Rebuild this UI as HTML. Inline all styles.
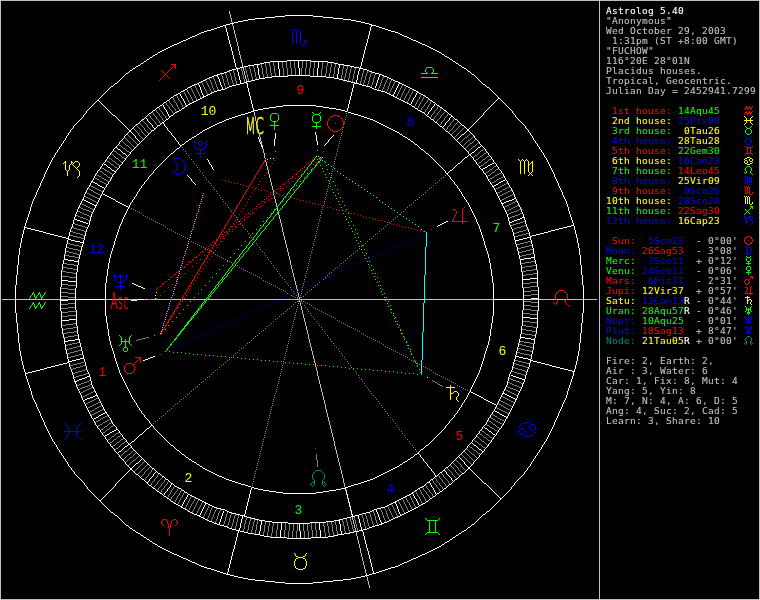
<!DOCTYPE html>
<html><head><meta charset="utf-8"><title>Astrolog 5.40</title>
<style>
html,body{margin:0;padding:0;background:#000}
body{width:760px;height:600px;overflow:hidden}
svg{display:block}
.px{fill:none;stroke-width:1;shape-rendering:crispEdges}
.t text{font-family:"DejaVu Sans Mono","Liberation Mono",monospace;font-size:9.5px;letter-spacing:.281px;white-space:pre;stroke-width:.1px}
text.h{font-family:"Liberation Mono",monospace;font-size:13px;text-anchor:middle}
text.l{font-family:"DejaVu Sans","Liberation Sans",sans-serif;font-weight:200;font-size:23.3px;text-anchor:middle;stroke-width:.5px;vector-effect:non-scaling-stroke}
</style></head><body>
<svg width="760" height="600" viewBox="0 0 760 600">
<mask id="m" maskUnits="userSpaceOnUse" x="0" y="0" width="760" height="600"><rect width="760" height="600" fill="#fff"/></mask>
<rect width="760" height="600" fill="#000"/>
<g class="px" transform="translate(0,.5)">
<path stroke="#c0c0c0" d="M2 299h595"/>
<path stroke="#c0c0c0" d="M229 11h1M229 12h1M229 13h1M230 14h1M230 15h1M230 16h1M230 17h1M231 18h1M231 19h1M231 20h1M231 21h1M232 22h1M232 23h1M232 24h1M232 25h1M233 26h1M233 27h1M233 28h1M233 29h1M234 30h1M234 31h1M234 32h1M234 33h1M235 34h1M235 35h1M235 36h1M235 37h1M236 38h1M236 39h1M236 40h1M236 41h1M237 42h1M237 43h1M237 44h1M237 45h1M238 46h1M238 47h1M238 48h1M238 49h1M238 50h1M239 51h1M239 52h1M239 53h1M239 54h1M240 55h1M240 56h1M240 57h1M240 58h1M241 59h1M241 60h1M241 61h1M241 62h1M242 63h1M242 64h1M242 65h1M242 66h1M243 67h1M243 68h1M243 69h1M243 70h1M244 71h1M244 72h1M244 73h1M244 74h1M245 75h1M245 76h1M245 77h1M245 78h1M246 79h1M246 80h1M246 81h1M246 82h1M247 83h1M247 84h1M247 85h1M247 86h1M247 87h1M248 88h1M248 89h1M248 90h1M248 91h1M249 92h1M249 93h1M249 94h1M249 95h1M250 96h1M250 97h1M250 98h1M250 99h1M251 100h1M251 101h1M251 102h1M251 103h1M252 104h1M252 105h1M252 106h1M252 107h1M253 108h1M253 109h1M253 110h1M253 111h1M254 112h1M254 113h1M254 114h1M254 115h1M255 116h1M255 117h1M255 118h1M255 119h1M255 120h1M256 121h1M256 122h1M256 123h1M256 124h1M257 125h1M257 126h1M257 127h1M257 128h1M258 129h1M258 130h1M258 131h1M258 132h1M259 133h1M259 134h1M259 135h1M259 136h1M260 137h1M260 138h1M260 139h1M260 140h1M261 141h1M261 142h1M261 143h1M261 144h1M262 145h1M262 146h1M262 147h1M262 148h1M263 149h1M263 150h1M263 151h1M263 152h1M264 153h1M264 154h1M264 155h1M264 156h1M264 157h1M265 158h1M265 159h1M265 160h1M265 161h1M266 162h1M266 163h1M266 164h1M266 165h1M267 166h1M267 167h1M267 168h1M267 169h1M268 170h1M268 171h1M268 172h1M268 173h1M269 174h1M269 175h1M269 176h1M269 177h1M270 178h1M270 179h1M270 180h1M270 181h1M271 182h1M271 183h1M271 184h1M271 185h1M272 186h1M272 187h1M272 188h1M272 189h1M273 190h1M273 191h1M273 192h1M273 193h1M273 194h1M274 195h1M274 196h1M274 197h1M274 198h1M275 199h1M275 200h1M275 201h1M275 202h1M276 203h1M276 204h1M276 205h1M276 206h1M277 207h1M277 208h1M277 209h1M277 210h1M278 211h1M278 212h1M278 213h1M278 214h1M279 215h1M279 216h1M279 217h1M279 218h1M280 219h1M280 220h1M280 221h1M280 222h1M281 223h1M281 224h1M281 225h1M281 226h1M282 227h1M282 228h1M282 229h1M282 230h1M282 231h1M283 232h1M283 233h1M283 234h1M283 235h1M284 236h1M284 237h1M284 238h1M284 239h1M285 240h1M285 241h1M285 242h1M285 243h1M286 244h1M286 245h1M286 246h1M286 247h1M287 248h1M287 249h1M287 250h1M287 251h1M288 252h1M288 253h1M288 254h1M288 255h1M289 256h1M289 257h1M289 258h1M289 259h1M290 260h1M290 261h1M290 262h1M290 263h1M290 264h1M291 265h1M291 266h1M291 267h1M291 268h1M292 269h1M292 270h1M292 271h1M292 272h1M293 273h1M293 274h1M293 275h1M293 276h1M294 277h1M294 278h1M294 279h1M294 280h1M295 281h1M295 282h1M295 283h1M295 284h1M296 285h1M296 286h1M296 287h1M296 288h1M297 289h1M297 290h1M297 291h1M297 292h1M298 293h1M298 294h1M298 295h1M298 296h1M299 297h1M299 298h1M299 299h1M299 300h1M299 301h1M300 302h1M300 303h1M300 304h1M300 305h1M301 306h1M301 307h1M301 308h1M301 309h1M302 310h1M302 311h1M302 312h1M302 313h1M303 314h1M303 315h1M303 316h1M303 317h1M304 318h1M304 319h1M304 320h1M304 321h1M305 322h1M305 323h1M305 324h1M305 325h1M306 326h1M306 327h1M306 328h1M306 329h1M307 330h1M307 331h1M307 332h1M307 333h1M308 334h1M308 335h1M308 336h1M308 337h1M308 338h1M309 339h1M309 340h1M309 341h1M309 342h1M310 343h1M310 344h1M310 345h1M310 346h1M311 347h1M311 348h1M311 349h1M311 350h1M312 351h1M312 352h1M312 353h1M312 354h1M313 355h1M313 356h1M313 357h1M313 358h1M314 359h1M314 360h1M314 361h1M314 362h1M315 363h1M315 364h1M315 365h1M315 366h1M316 367h1M316 368h1M316 369h1M316 370h1M317 371h1M317 372h1M317 373h1M317 374h1M317 375h1M318 376h1M318 377h1M318 378h1M318 379h1M319 380h1M319 381h1M319 382h1M319 383h1M320 384h1M320 385h1M320 386h1M320 387h1M321 388h1M321 389h1M321 390h1M321 391h1M322 392h1M322 393h1M322 394h1M322 395h1M323 396h1M323 397h1M323 398h1M323 399h1M324 400h1M324 401h1M324 402h1M324 403h1M325 404h1M325 405h1M325 406h1M325 407h1M325 408h1M326 409h1M326 410h1M326 411h1M326 412h1M327 413h1M327 414h1M327 415h1M327 416h1M328 417h1M328 418h1M328 419h1M328 420h1M329 421h1M329 422h1M329 423h1M329 424h1M330 425h1M330 426h1M330 427h1M330 428h1M331 429h1M331 430h1M331 431h1M331 432h1M332 433h1M332 434h1M332 435h1M332 436h1M333 437h1M333 438h1M333 439h1M333 440h1M334 441h1M334 442h1M334 443h1M334 444h1M334 445h1M335 446h1M335 447h1M335 448h1M335 449h1M336 450h1M336 451h1M336 452h1M336 453h1M337 454h1M337 455h1M337 456h1M337 457h1M338 458h1M338 459h1M338 460h1M338 461h1M339 462h1M339 463h1M339 464h1M339 465h1M340 466h1M340 467h1M340 468h1M340 469h1M341 470h1M341 471h1M341 472h1M341 473h1M342 474h1M342 475h1M342 476h1M342 477h1M343 478h1M343 479h1M343 480h1M343 481h1M343 482h1M344 483h1M344 484h1M344 485h1M344 486h1M345 487h1M345 488h1M345 489h1M345 490h1M346 491h1M346 492h1M346 493h1M346 494h1M347 495h1M347 496h1M347 497h1M347 498h1M348 499h1M348 500h1M348 501h1M348 502h1M349 503h1M349 504h1M349 505h1M349 506h1M350 507h1M350 508h1M350 509h1M350 510h1M351 511h1M351 512h1M351 513h1M351 514h1M352 515h1M352 516h1M352 517h1M352 518h1M352 519h1M353 520h1M353 521h1M353 522h1M353 523h1M354 524h1M354 525h1M354 526h1M354 527h1M355 528h1M355 529h1M355 530h1M355 531h1M356 532h1M356 533h1M356 534h1M356 535h1M357 536h1M357 537h1M357 538h1M357 539h1M358 540h1M358 541h1M358 542h1M358 543h1M359 544h1M359 545h1M359 546h1M359 547h1M360 548h1M360 549h1M360 550h1M360 551h1M360 552h1M361 553h1M361 554h1M361 555h1M361 556h1M362 557h1M362 558h1M362 559h1M362 560h1M363 561h1M363 562h1M363 563h1M363 564h1M364 565h1M364 566h1M364 567h1M364 568h1M365 569h1M365 570h1M365 571h1M365 572h1M366 573h1M366 574h1M366 575h1M366 576h1M367 577h1M367 578h1M367 579h1M367 580h1M368 581h1M368 582h1M368 583h1M368 584h1M369 585h1M369 586h1M369 587h1"/>
<path stroke="#808080" d="M282 61h1M286 61h1M290 61h1M294 61h1M302 61h1M306 61h1M310 61h1M314 61h1M269 62h1M273 62h1M282 62h1M286 62h1M290 62h1M294 62h1M302 62h1M306 62h1M310 62h1M314 62h1M322 62h1M327 62h1M265 63h1M269 63h1M273 63h1M282 63h1M286 63h1M290 63h1M294 63h1M302 63h1M306 63h1M310 63h1M314 63h1M322 63h1M327 63h1M331 63h1M335 63h1M261 64h1M265 64h1M269 64h1M273 64h1M282 64h1M286 64h1M290 64h1M294 64h1M302 64h1M306 64h1M310 64h1M314 64h1M322 64h1M327 64h1M331 64h1M335 64h1M253 65h1M261 65h1M265 65h1M269 65h1M273 65h1M282 65h1M286 65h1M290 65h1M294 65h1M302 65h1M306 65h1M310 65h1M314 65h1M322 65h1M327 65h1M331 65h1M335 65h1M343 65h1M249 66h1M253 66h1M261 66h1M265 66h1M270 66h1M274 66h1M282 66h1M286 66h1M290 66h1M294 66h1M302 66h1M306 66h1M310 66h1M314 66h1M322 66h1M326 66h1M331 66h1M335 66h1M343 66h1M347 66h1M351 66h1M245 67h1M249 67h1M253 67h1M261 67h1M266 67h1M270 67h1M274 67h1M282 67h1M286 67h1M290 67h1M294 67h1M302 67h1M306 67h1M310 67h1M314 67h1M322 67h1M326 67h1M330 67h1M334 67h1M343 67h1M347 67h1M351 67h1M355 67h1M241 68h1M245 68h1M249 68h1M254 68h1M262 68h1M266 68h1M270 68h1M274 68h1M283 68h1M287 68h1M291 68h1M295 68h1M301 68h1M305 68h1M309 68h1M313 68h1M322 68h1M326 68h1M330 68h1M334 68h1M343 68h1M347 68h1M351 68h1M355 68h1M241 69h1M245 69h1M250 69h1M254 69h1M262 69h1M266 69h1M270 69h1M274 69h1M283 69h1M287 69h1M291 69h1M295 69h1M301 69h1M305 69h1M309 69h1M313 69h1M321 69h1M326 69h1M330 69h1M334 69h1M342 69h1M346 69h1M350 69h1M355 69h1M233 70h1M241 70h1M246 70h1M250 70h1M254 70h1M262 70h1M266 70h1M270 70h1M274 70h1M283 70h1M287 70h1M291 70h1M295 70h1M301 70h1M305 70h1M309 70h1M313 70h1M321 70h1M326 70h1M330 70h1M334 70h1M342 70h1M346 70h1M350 70h1M354 70h1M363 70h1M229 71h1M233 71h1M242 71h1M246 71h1M250 71h1M254 71h1M262 71h1M266 71h1M270 71h1M274 71h1M283 71h1M287 71h1M291 71h1M295 71h1M301 71h1M305 71h1M309 71h1M313 71h1M321 71h1M326 71h1M330 71h1M334 71h1M342 71h1M346 71h1M350 71h1M354 71h1M363 71h1M367 71h1M229 72h1M233 72h1M242 72h1M246 72h1M250 72h1M255 72h1M262 72h1M266 72h1M270 72h1M274 72h1M283 72h1M287 72h1M291 72h1M295 72h1M301 72h1M305 72h1M309 72h1M313 72h1M321 72h1M326 72h1M330 72h1M334 72h1M342 72h1M346 72h1M350 72h1M354 72h1M363 72h1M367 72h1M371 72h1M225 73h1M230 73h1M234 73h1M242 73h1M246 73h1M251 73h1M255 73h1M262 73h1M266 73h1M271 73h1M275 73h1M283 73h1M287 73h1M291 73h1M295 73h1M301 73h1M305 73h1M309 73h1M313 73h1M321 73h1M325 73h1M329 73h1M334 73h1M342 73h1M345 73h1M349 73h1M354 73h1M362 73h1M366 73h1M371 73h1M375 73h1M221 74h1M225 74h1M230 74h1M234 74h1M242 74h1M247 74h1M251 74h1M255 74h1M263 74h1M267 74h1M271 74h1M275 74h1M283 74h1M287 74h1M291 74h1M295 74h1M301 74h1M305 74h1M309 74h1M313 74h1M321 74h1M325 74h1M329 74h1M333 74h1M342 74h1M345 74h1M349 74h1M353 74h1M362 74h1M366 74h1M370 74h1M375 74h1M221 75h1M226 75h1M230 75h1M234 75h1M243 75h1M247 75h1M251 75h1M255 75h1M263 75h1M267 75h1M271 75h1M275 75h1M283 75h1M287 75h1M313 75h1M321 75h1M325 75h1M329 75h1M333 75h1M341 75h1M345 75h1M349 75h1M353 75h1M362 75h1M366 75h1M370 75h1M374 75h1M222 76h1M226 76h1M231 76h1M234 76h1M243 76h1M247 76h1M251 76h1M255 76h1M263 76h1M267 76h1M271 76h1M275 76h1M325 76h1M329 76h1M333 76h1M341 76h1M345 76h1M349 76h1M353 76h1M362 76h1M365 76h1M370 76h1M374 76h1M383 76h1M213 77h1M222 77h1M226 77h1M231 77h1M235 77h1M243 77h1M247 77h1M252 77h1M256 77h1M263 77h1M267 77h1M333 77h1M341 77h1M344 77h1M349 77h1M353 77h1M361 77h1M365 77h1M369 77h1M374 77h1M383 77h1M209 78h1M213 78h1M222 78h1M227 78h1M231 78h1M235 78h1M243 78h1M248 78h1M252 78h1M256 78h1M341 78h1M344 78h1M348 78h1M353 78h1M361 78h1M365 78h1M369 78h1M373 78h1M382 78h1M387 78h1M209 79h1M214 79h1M223 79h1M227 79h1M231 79h1M235 79h1M244 79h1M248 79h1M252 79h1M256 79h1M344 79h1M348 79h1M352 79h1M361 79h1M365 79h1M369 79h1M373 79h1M382 79h1M387 79h1M391 79h1M205 80h1M210 80h1M214 80h1M223 80h1M227 80h1M232 80h1M235 80h1M244 80h1M248 80h1M348 80h1M352 80h1M361 80h1M364 80h1M369 80h1M373 80h1M381 80h1M386 80h1M391 80h1M206 81h1M210 81h1M215 81h1M223 81h1M227 81h1M232 81h1M236 81h1M244 81h1M352 81h1M360 81h1M364 81h1M368 81h1M373 81h1M381 81h1M386 81h1M390 81h1M395 81h1M201 82h1M206 82h1M211 82h1M215 82h1M223 82h1M228 82h1M232 82h1M236 82h1M360 82h1M364 82h1M368 82h1M372 82h1M381 82h1M385 82h1M390 82h1M394 82h1M202 83h1M207 83h1M211 83h1M215 83h1M224 83h1M228 83h1M233 83h1M236 83h1M360 83h1M363 83h1M368 83h1M372 83h1M380 83h1M385 83h1M389 83h1M394 83h1M202 84h1M207 84h1M211 84h1M216 84h1M224 84h1M228 84h1M233 84h1M363 84h1M367 84h1M372 84h1M380 84h1M384 84h1M389 84h1M393 84h1M402 84h1M194 85h1M203 85h1M208 85h1M212 85h1M216 85h1M224 85h1M229 85h1M367 85h1M371 85h1M380 85h1M384 85h1M389 85h1M393 85h1M402 85h1M195 86h1M203 86h1M208 86h1M212 86h1M216 86h1M225 86h1M229 86h1M371 86h1M379 86h1M384 86h1M388 86h1M392 86h1M401 86h1M406 86h1M190 87h1M195 87h1M204 87h1M209 87h1M212 87h1M217 87h1M225 87h1M379 87h1M383 87h1M388 87h1M392 87h1M401 87h1M405 87h1M191 88h1M196 88h1M204 88h1M209 88h1M213 88h1M217 88h1M378 88h1M383 88h1M388 88h1M391 88h1M400 88h1M405 88h1M410 88h1M186 89h1M191 89h1M196 89h1M205 89h1M210 89h1M213 89h1M218 89h1M378 89h1M382 89h1M387 89h1M391 89h1M400 89h1M404 89h1M409 89h1M187 90h1M192 90h1M197 90h1M205 90h1M210 90h1M214 90h1M218 90h1M382 90h1M387 90h1M390 90h1M399 90h1M404 90h1M409 90h1M413 90h1M183 91h1M187 91h1M192 91h1M197 91h1M206 91h1M211 91h1M214 91h1M386 91h1M390 91h1M399 91h1M403 91h1M408 91h1M412 91h1M184 92h1M188 92h1M193 92h1M198 92h1M206 92h1M211 92h1M386 92h1M389 92h1M398 92h1M403 92h1M408 92h1M412 92h1M184 93h1M188 93h1M193 93h1M198 93h1M207 93h1M389 93h1M398 93h1M402 93h1M407 93h1M411 93h1M185 94h1M189 94h1M194 94h1M199 94h1M207 94h1M397 94h1M402 94h1M406 94h1M411 94h1M421 94h1M176 95h1M185 95h1M190 95h1M194 95h1M199 95h1M397 95h1M401 95h1M406 95h1M410 95h1M420 95h1M177 96h1M186 96h1M190 96h1M195 96h1M200 96h1M396 96h1M401 96h1M405 96h1M410 96h1M420 96h1M424 96h1M172 97h1M177 97h1M186 97h1M191 97h1M195 97h1M200 97h1M396 97h1M400 97h1M405 97h1M409 97h1M419 97h1M423 97h1M173 98h1M178 98h1M187 98h1M191 98h1M196 98h1M400 98h1M404 98h1M409 98h1M419 98h1M423 98h1M173 99h1M178 99h1M187 99h1M192 99h1M196 99h1M404 99h1M408 99h1M418 99h1M422 99h1M428 99h1M168 100h1M174 100h1M179 100h1M188 100h1M192 100h1M403 100h1M408 100h1M417 100h1M422 100h1M427 100h1M169 101h1M174 101h1M180 101h1M188 101h1M193 101h1M407 101h1M417 101h1M421 101h1M427 101h1M431 101h1M165 102h1M169 102h1M175 102h1M180 102h1M189 102h1M407 102h1M416 102h1M420 102h1M426 102h1M430 102h1M166 103h1M170 103h1M176 103h1M181 103h1M189 103h1M416 103h1M420 103h1M425 103h1M430 103h1M166 104h1M171 104h1M176 104h1M181 104h1M415 104h1M419 104h1M424 104h1M429 104h1M167 105h1M172 105h1M177 105h1M182 105h1M415 105h1M419 105h1M424 105h1M428 105h1M168 106h1M172 106h1M177 106h1M182 106h1M414 106h1M418 106h1M423 106h1M428 106h1M438 106h1M158 107h1M169 107h1M173 107h1M178 107h1M183 107h1M418 107h1M422 107h1M427 107h1M437 107h1M159 108h1M169 108h1M174 108h1M178 108h1M417 108h1M421 108h1M427 108h1M437 108h1M441 108h1M155 109h1M159 109h1M170 109h1M175 109h1M179 109h1M421 109h1M426 109h1M436 109h1M440 109h1M156 110h1M160 110h1M171 110h1M175 110h1M420 110h1M425 110h1M435 110h1M440 110h1M156 111h1M161 111h1M172 111h1M176 111h1M425 111h1M434 111h1M439 111h1M445 111h1M152 112h1M157 112h1M162 112h1M172 112h1M424 112h1M434 112h1M438 112h1M444 112h1M153 113h1M158 113h1M162 113h1M173 113h1M433 113h1M437 113h1M443 113h1M448 113h1M148 114h1M153 114h1M159 114h1M163 114h1M432 114h1M437 114h1M442 114h1M447 114h1M149 115h1M154 115h1M159 115h1M164 115h1M431 115h1M436 115h1M441 115h1M447 115h1M150 116h1M155 116h1M160 116h1M165 116h1M431 116h1M435 116h1M440 116h1M446 116h1M150 117h1M156 117h1M161 117h1M165 117h1M430 117h1M434 117h1M440 117h1M445 117h1M151 118h1M156 118h1M162 118h1M166 118h1M434 118h1M439 118h1M444 118h1M454 118h1M152 119h1M157 119h1M162 119h1M433 119h1M438 119h1M444 119h1M453 119h1M142 120h1M153 120h1M158 120h1M163 120h1M437 120h1M443 120h1M453 120h1M143 121h1M154 121h1M159 121h1M436 121h1M442 121h1M452 121h1M458 121h1M144 122h1M155 122h1M159 122h1M441 122h1M451 122h1M457 122h1M139 123h1M145 123h1M155 123h1M160 123h1M441 123h1M450 123h1M456 123h1M140 124h1M146 124h1M156 124h1M440 124h1M450 124h1M455 124h1M461 124h1M136 125h1M141 125h1M147 125h1M157 125h1M449 125h1M454 125h1M460 125h1M137 126h1M142 126h1M147 126h1M448 126h1M453 126h1M459 126h1M138 127h1M143 127h1M148 127h1M447 127h1M453 127h1M458 127h1M464 127h1M133 128h1M139 128h1M144 128h1M149 128h1M447 128h1M452 128h1M457 128h1M463 128h1M134 129h1M140 129h1M144 129h1M150 129h1M446 129h1M451 129h1M456 129h1M462 129h1M135 130h1M141 130h1M145 130h1M151 130h1M450 130h1M455 130h1M461 130h1M136 131h1M141 131h1M146 131h1M449 131h1M454 131h1M460 131h1M137 132h1M142 132h1M147 132h1M453 132h1M459 132h1M138 133h1M143 133h1M148 133h1M452 133h1M458 133h1M470 133h1M127 134h1M138 134h1M144 134h1M451 134h1M457 134h1M469 134h1M128 135h1M139 135h1M145 135h1M456 135h1M468 135h1M129 136h1M140 136h1M455 136h1M467 136h1M473 136h1M124 137h1M130 137h1M141 137h1M454 137h1M465 137h2M472 137h1M125 138h1M131 138h1M142 138h1M464 138h1M471 138h1M126 139h1M132 139h1M463 139h1M470 139h1M475 139h1M121 140h1M127 140h1M133 140h1M462 140h1M468 140h2M474 140h1M122 141h1M128 141h1M134 141h1M461 141h1M467 141h1M473 141h1M123 142h1M129 142h1M135 142h1M460 142h1M466 142h1M472 142h1M478 142h1M124 143h1M130 143h1M136 143h1M465 143h1M470 143h2M477 143h1M118 144h1M125 144h1M131 144h1M137 144h1M464 144h1M469 144h1M476 144h1M119 145h2M126 145h2M132 145h1M463 145h1M468 145h1M475 145h1M121 146h1M128 146h1M133 146h1M467 146h1M473 146h2M122 147h1M129 147h1M134 147h1M466 147h1M472 147h1M123 148h2M130 148h1M465 148h1M471 148h1M484 148h1M125 149h1M131 149h1M470 149h1M483 149h1M113 150h1M126 150h1M469 150h1M481 150h2M114 151h2M127 151h2M468 151h1M480 151h1M116 152h1M129 152h1M479 152h1M486 152h1M111 153h1M117 153h1M478 153h1M484 153h2M112 154h1M118 154h2M477 154h1M483 154h1M113 155h1M120 155h1M475 155h2M482 155h1M489 155h1M114 156h1M121 156h1M474 156h1M480 156h2M487 156h2M108 157h1M115 157h1M122 157h2M473 157h1M479 157h1M486 157h1M109 158h2M116 158h2M124 158h1M478 158h1M485 158h1M491 158h1M111 159h1M118 159h1M476 159h2M483 159h2M489 159h2M106 160h1M112 160h1M119 160h1M475 160h1M482 160h1M488 160h1M107 161h2M113 161h2M120 161h1M481 161h1M487 161h1M109 162h1M115 162h1M121 162h1M479 162h2M485 162h2M110 163h1M116 163h1M478 163h1M484 163h1M111 164h2M117 164h2M483 164h1M113 165h1M119 165h1M481 165h2M496 165h1M114 166h1M480 166h1M494 166h2M101 167h1M115 167h2M493 167h1M102 168h2M117 168h1M492 168h1M498 168h1M104 169h1M490 169h2M496 169h2M99 170h1M105 170h2M489 170h1M495 170h1M100 171h2M107 171h2M488 171h1M494 171h1M102 172h1M109 172h1M486 172h2M492 172h2M501 172h1M103 173h1M110 173h2M485 173h1M491 173h1M499 173h2M96 174h1M104 174h2M112 174h1M490 174h1M497 174h2M97 175h2M106 175h1M488 175h2M495 175h2M99 176h2M107 176h1M487 176h1M494 176h1M503 176h1M94 177h1M101 177h1M108 177h2M492 177h2M501 177h2M95 178h2M102 178h2M110 178h1M490 178h2M499 178h2M97 179h2M104 179h2M489 179h1M497 179h2M99 180h1M106 180h2M496 180h1M100 181h2M108 181h1M494 181h2M102 182h2M492 182h2M104 183h2M491 183h1M506 183h2M106 184h1M504 184h2M90 185h1M502 185h2M91 186h2M500 186h2M509 186h1M93 187h2M498 187h2M507 187h2M88 188h1M95 188h2M496 188h2M505 188h2M89 189h2M97 189h2M495 189h1M503 189h2M91 190h2M99 190h2M502 190h1M510 190h2M93 191h1M101 191h2M500 191h2M508 191h2M86 192h1M94 192h2M498 192h2M506 192h2M87 193h2M96 193h2M497 193h1M504 193h2M89 194h2M98 194h2M502 194h2M512 194h2M91 195h2M100 195h1M500 195h2M510 195h2M84 196h2M93 196h2M499 196h1M508 196h2M86 197h2M95 197h2M506 197h2M88 198h2M97 198h2M504 198h2M90 199h2M502 199h2M92 200h2M501 200h1M94 201h2M515 201h2M96 202h2M513 202h2M81 203h1M511 203h2M82 204h2M509 204h2M84 205h2M507 205h2M517 205h2M86 206h2M505 206h2M515 206h2M79 207h2M88 207h2M504 207h1M513 207h2M81 208h2M90 208h2M511 208h2M83 209h3M92 209h2M509 209h2M519 209h2M86 210h3M507 210h2M517 210h2M78 211h2M89 211h2M506 211h1M514 211h3M80 212h2M91 212h2M511 212h3M82 213h2M509 213h2M520 213h2M84 214h3M507 214h2M518 214h2M76 215h2M87 215h2M515 215h3M78 216h2M89 216h2M512 216h3M80 217h3M510 217h2M83 218h3M508 218h2M86 219h2M88 220h2M523 221h2M520 222h3M73 223h2M516 223h4M75 224h3M513 224h3M78 225h4M511 225h2M524 225h2M82 226h3M521 226h3M72 227h2M85 227h2M517 227h4M74 228h3M514 228h3M77 229h4M512 229h2M526 229h2M81 230h3M523 230h3M71 231h2M84 231h2M519 231h4M73 232h3M516 232h3M76 233h4M514 233h2M526 233h3M80 234h3M522 234h4M70 235h3M83 235h2M518 235h4M73 236h4M515 236h3M77 237h4M81 238h3M528 241h3M524 242h4M67 243h3M520 243h4M70 244h4M517 244h3M74 245h5M529 245h3M79 246h3M525 246h4M66 247h3M521 247h4M69 248h4M518 248h3M73 249h5M530 249h3M78 250h3M526 250h4M66 251h3M522 251h4M69 252h4M519 252h3M73 253h4M531 253h3M77 254h3M526 254h5M65 255h4M522 255h4M69 256h6M519 256h3M75 257h4M531 261h4M525 262h6M63 263h4M521 263h4M67 264h7M74 265h4M532 265h4M525 266h7M63 267h4M521 267h4M67 268h6M73 269h4M533 269h4M526 270h7M62 271h4M522 271h4M66 272h7M73 273h4M533 273h4M526 274h7M522 275h4M62 276h7M69 277h7M530 282h8M523 283h7M61 284h7M68 285h8M530 286h8M523 287h7M61 288h7M68 289h7M531 290h7M524 291h7M61 292h7M68 293h7M531 294h7M524 295h7M61 296h7M68 297h7M524 301h7M531 302h7M68 303h7M61 304h7M524 305h7M531 306h7M68 307h7M61 308h7M524 309h7M531 310h7M68 311h8M61 312h7M523 313h7M530 314h8M68 315h8M61 316h7M523 321h7M530 322h7M73 323h4M66 324h7M62 325h4M522 325h4M526 326h7M73 327h4M533 327h4M66 328h7M62 329h4M522 329h4M526 330h6M74 331h4M532 331h4M67 332h7M63 333h4M521 333h4M525 334h7M74 335h4M532 335h4M68 336h6M64 337h4M520 341h4M77 342h3M524 342h6M72 343h5M530 343h4M68 344h4M519 344h3M65 345h3M522 345h4M77 346h3M526 346h4M73 347h4M530 347h3M69 348h4M518 348h3M66 349h3M521 349h4M78 350h3M525 350h5M74 351h4M530 351h3M70 352h4M517 352h3M67 353h3M520 353h4M79 354h3M524 354h5M75 355h4M529 355h3M71 356h4M68 357h3M515 360h3M518 361h4M81 362h3M522 362h4M77 363h4M514 363h2M526 363h3M73 364h4M516 364h3M70 365h3M83 365h2M519 365h4M80 366h3M523 366h3M76 367h4M513 367h2M526 367h2M73 368h3M515 368h3M71 369h2M85 369h2M518 369h4M82 370h3M522 370h3M78 371h4M512 371h2M525 371h2M75 372h3M514 372h3M73 373h2M86 373h2M517 373h4M83 374h3M521 374h3M79 375h4M524 375h2M76 376h3M74 377h2M509 378h2M511 379h2M89 380h2M513 380h3M87 381h2M516 381h3M84 382h3M508 382h2M519 382h2M81 383h3M510 383h2M521 383h2M79 384h2M90 384h2M512 384h2M77 385h2M88 385h2M514 385h3M85 386h3M506 386h2M517 386h2M82 387h3M91 387h2M508 387h2M519 387h2M80 388h2M89 388h2M510 388h3M78 389h2M87 389h2M505 389h1M513 389h3M85 390h2M506 390h2M516 390h2M83 391h2M93 391h2M508 391h2M518 391h2M81 392h2M91 392h2M510 392h2M80 393h1M89 393h2M512 393h2M87 394h2M514 394h2M85 395h2M516 395h2M83 396h2M501 396h2M82 397h1M503 397h2M96 398h2M505 398h2M94 399h2M507 399h2M92 400h2M500 400h1M509 400h2M90 401h2M501 401h2M511 401h2M88 402h2M98 402h2M503 402h2M513 402h2M86 403h2M96 403h2M498 403h1M505 403h2M85 404h1M94 404h2M499 404h2M507 404h2M92 405h2M101 405h1M501 405h2M509 405h2M90 406h2M99 406h2M503 406h1M511 406h2M88 407h2M97 407h2M496 407h1M504 407h2M87 408h1M95 408h2M497 408h2M506 408h2M94 409h1M102 409h2M499 409h2M508 409h2M92 410h2M100 410h2M501 410h2M510 410h1M90 411h2M98 411h2M503 411h2M89 412h1M96 412h2M505 412h2M94 413h2M507 413h2M92 414h2M492 414h1M91 415h1M107 415h1M493 415h2M105 416h2M495 416h2M103 417h2M490 417h1M497 417h1M101 418h2M491 418h2M498 418h2M100 419h1M109 419h1M493 419h2M500 419h2M98 420h2M107 420h2M488 420h1M495 420h1M502 420h2M96 421h2M105 421h2M489 421h2M496 421h2M504 421h1M95 422h1M103 422h2M111 422h1M491 422h1M498 422h2M102 423h1M109 423h2M492 423h1M500 423h2M100 424h2M108 424h1M486 424h1M493 424h2M502 424h1M98 425h2M107 425h1M113 425h1M487 425h2M495 425h1M97 426h1M105 426h2M111 426h2M489 426h1M496 426h1M104 427h1M110 427h1M490 427h2M497 427h2M103 428h1M109 428h1M492 428h2M499 428h1M101 429h2M107 429h2M494 429h1M100 430h1M106 430h1M481 430h1M495 430h2M105 431h1M482 431h2M497 431h1M103 432h2M118 432h1M484 432h1M102 433h1M116 433h2M479 433h1M485 433h1M115 434h1M480 434h2M486 434h2M114 435h1M120 435h1M482 435h1M488 435h1M112 436h2M118 436h2M477 436h1M483 436h1M489 436h1M111 437h1M117 437h1M478 437h1M484 437h2M490 437h2M110 438h1M116 438h1M123 438h1M479 438h1M486 438h1M492 438h1M108 439h2M114 439h2M121 439h2M480 439h1M487 439h1M107 440h1M113 440h1M120 440h1M474 440h1M481 440h1M488 440h2M112 441h1M119 441h1M125 441h1M475 441h2M482 441h2M490 441h1M110 442h2M117 442h2M124 442h1M477 442h1M484 442h1M109 443h1M116 443h1M122 443h2M478 443h1M485 443h1M115 444h1M121 444h1M479 444h2M486 444h1M113 445h2M120 445h1M481 445h1M487 445h1M112 446h1M119 446h1M469 446h1M482 446h1M118 447h1M130 447h1M470 447h2M483 447h2M116 448h2M129 448h1M472 448h1M485 448h1M115 449h1M128 449h1M467 449h1M473 449h1M114 450h1M127 450h1M133 450h1M468 450h1M474 450h2M125 451h2M132 451h1M464 451h1M469 451h1M476 451h1M124 452h1M131 452h1M465 452h1M470 452h1M477 452h1M123 453h1M130 453h1M135 453h1M466 453h1M471 453h1M478 453h2M122 454h1M128 454h2M134 454h1M461 454h1M467 454h1M472 454h2M480 454h1M121 455h1M127 455h1M133 455h1M462 455h1M468 455h1M474 455h1M120 456h1M126 456h1M132 456h1M138 456h1M463 456h1M469 456h1M475 456h1M125 457h1M130 457h2M137 457h1M464 457h1M470 457h1M476 457h1M124 458h1M129 458h1M136 458h1M465 458h1M471 458h1M477 458h1M123 459h1M128 459h1M135 459h1M466 459h1M472 459h1M127 460h1M133 460h2M456 460h1M467 460h1M473 460h1M126 461h1M132 461h1M144 461h1M457 461h1M468 461h1M474 461h1M125 462h1M131 462h1M143 462h1M458 462h1M469 462h1M130 463h1M142 463h1M453 463h1M459 463h1M470 463h1M129 464h1M141 464h1M147 464h1M454 464h1M460 464h1M471 464h1M128 465h1M140 465h1M146 465h1M450 465h1M455 465h1M461 465h1M139 466h1M145 466h1M451 466h1M456 466h1M461 466h1M138 467h1M144 467h1M149 467h1M452 467h1M457 467h1M462 467h1M137 468h1M143 468h1M148 468h1M447 468h1M453 468h1M458 468h1M463 468h1M136 469h1M142 469h1M147 469h1M152 469h1M448 469h1M454 469h1M458 469h1M464 469h1M135 470h1M141 470h1M146 470h1M151 470h1M449 470h1M455 470h1M459 470h1M465 470h1M134 471h1M140 471h1M145 471h1M151 471h1M450 471h1M455 471h1M460 471h1M139 472h1M144 472h1M150 472h1M451 472h1M456 472h1M461 472h1M138 473h1M144 473h1M149 473h1M441 473h1M452 473h1M457 473h1M462 473h1M137 474h1M143 474h1M148 474h1M158 474h1M442 474h1M452 474h1M458 474h1M142 475h1M148 475h1M157 475h1M438 475h1M443 475h1M453 475h1M459 475h1M141 476h1M147 476h1M157 476h1M439 476h1M443 476h1M454 476h1M140 477h1M146 477h1M156 477h1M162 477h1M439 477h1M444 477h1M455 477h1M145 478h1M155 478h1M161 478h1M435 478h1M440 478h1M445 478h1M456 478h1M145 479h1M154 479h1M160 479h1M165 479h1M436 479h1M441 479h1M446 479h1M144 480h1M154 480h1M159 480h1M164 480h1M432 480h1M436 480h1M442 480h1M447 480h1M153 481h1M158 481h1M164 481h1M168 481h1M433 481h1M437 481h1M442 481h1M448 481h1M152 482h1M157 482h1M163 482h1M167 482h1M433 482h1M438 482h1M443 482h1M448 482h1M151 483h1M157 483h1M162 483h1M167 483h1M434 483h1M439 483h1M444 483h1M449 483h1M151 484h1M156 484h1M161 484h1M166 484h1M435 484h1M439 484h1M445 484h1M450 484h1M150 485h1M155 485h1M161 485h1M165 485h1M425 485h1M436 485h1M440 485h1M445 485h1M154 486h1M160 486h1M164 486h1M174 486h1M426 486h1M436 486h1M441 486h1M446 486h1M153 487h1M159 487h1M164 487h1M173 487h1M422 487h1M426 487h1M437 487h1M442 487h1M158 488h1M163 488h1M173 488h1M178 488h1M423 488h1M427 488h1M438 488h1M442 488h1M158 489h1M162 489h1M172 489h1M177 489h1M419 489h1M423 489h1M428 489h1M439 489h1M443 489h1M157 490h1M161 490h1M171 490h1M177 490h1M181 490h1M420 490h1M424 490h1M429 490h1M439 490h1M161 491h1M171 491h1M176 491h1M180 491h1M415 491h1M420 491h1M425 491h1M429 491h1M440 491h1M160 492h1M170 492h1M175 492h1M180 492h1M184 492h1M416 492h1M421 492h1M426 492h1M430 492h1M170 493h1M174 493h1M179 493h1M183 493h1M416 493h1M421 493h1M426 493h1M431 493h1M169 494h1M174 494h1M179 494h1M183 494h1M417 494h1M422 494h1M427 494h1M432 494h1M168 495h1M173 495h1M178 495h1M182 495h1M409 495h1M417 495h1M423 495h1M428 495h1M432 495h1M168 496h1M172 496h1M177 496h1M182 496h1M191 496h1M410 496h1M418 496h1M423 496h1M429 496h1M433 496h1M167 497h1M171 497h1M177 497h1M181 497h1M190 497h1M405 497h1M410 497h1M419 497h1M424 497h1M429 497h1M171 498h1M176 498h1M180 498h1M190 498h1M195 498h1M406 498h1M411 498h1M419 498h1M424 498h1M430 498h1M170 499h1M176 499h1M180 499h1M189 499h1M194 499h1M402 499h1M406 499h1M411 499h1M420 499h1M425 499h1M175 500h1M179 500h1M189 500h1M194 500h1M198 500h1M403 500h1M407 500h1M412 500h1M420 500h1M425 500h1M175 501h1M179 501h1M188 501h1M193 501h1M197 501h1M202 501h1M398 501h1M403 501h1M407 501h1M412 501h1M421 501h1M426 501h1M174 502h1M178 502h1M188 502h1M193 502h1M197 502h1M202 502h1M399 502h1M404 502h1M408 502h1M413 502h1M421 502h1M178 503h1M187 503h1M192 503h1M196 503h1M201 503h1M399 503h1M404 503h1M409 503h1M413 503h1M422 503h1M177 504h1M187 504h1M191 504h1M196 504h1M201 504h1M391 504h1M400 504h1M405 504h1M409 504h1M414 504h1M186 505h1M191 505h1M195 505h1M200 505h1M209 505h1M392 505h1M400 505h1M405 505h1M410 505h1M414 505h1M186 506h1M190 506h1M195 506h1M200 506h1M208 506h1M212 506h1M387 506h1M392 506h1M401 506h1M406 506h1M410 506h1M415 506h1M185 507h1M190 507h1M194 507h1M199 507h1M208 507h1M212 507h1M384 507h1M388 507h1M393 507h1M401 507h1M406 507h1M411 507h1M415 507h1M185 508h1M189 508h1M194 508h1M199 508h1M207 508h1M211 508h1M216 508h1M380 508h1M384 508h1M388 508h1M393 508h1M402 508h1M407 508h1M411 508h1M189 509h1M193 509h1M198 509h1M207 509h1M211 509h1M216 509h1M220 509h1M380 509h1M385 509h1M389 509h1M394 509h1M402 509h1M407 509h1M412 509h1M188 510h1M193 510h1M198 510h1M206 510h1M210 510h1M215 510h1M220 510h1M381 510h1M385 510h1M389 510h1M394 510h1M403 510h1M408 510h1M192 511h1M197 511h1M206 511h1M210 511h1M215 511h1M219 511h1M373 511h1M381 511h1M386 511h1M390 511h1M395 511h1M403 511h1M408 511h1M192 512h1M197 512h1M205 512h1M210 512h1M214 512h1M219 512h1M227 512h1M369 512h1M373 512h1M382 512h1M386 512h1M390 512h1M395 512h1M404 512h1M196 513h1M205 513h1M209 513h1M214 513h1M218 513h1M227 513h1M231 513h1M369 513h1M374 513h1M382 513h1M386 513h1M391 513h1M396 513h1M404 513h1M196 514h1M204 514h1M209 514h1M213 514h1M218 514h1M226 514h1M231 514h1M235 514h1M365 514h1M370 514h1M374 514h1M382 514h1M387 514h1M391 514h1M396 514h1M204 515h1M209 515h1M213 515h1M218 515h1M226 515h1M230 515h1M235 515h1M238 515h1M362 515h1M365 515h1M370 515h1M374 515h1M383 515h1M387 515h1M392 515h1M397 515h1M203 516h1M208 516h1M213 516h1M217 516h1M226 516h1M230 516h1M234 516h1M238 516h1M362 516h1M366 516h1M370 516h1M375 516h1M383 516h1M387 516h1M392 516h1M397 516h1M203 517h1M208 517h1M212 517h1M217 517h1M225 517h1M230 517h1M234 517h1M238 517h1M246 517h1M354 517h1M362 517h1M366 517h1M371 517h1M375 517h1M383 517h1M388 517h1M393 517h1M207 518h1M212 518h1M217 518h1M225 518h1M229 518h1M234 518h1M237 518h1M246 518h1M250 518h1M350 518h1M354 518h1M363 518h1M366 518h1M371 518h1M375 518h1M384 518h1M388 518h1M393 518h1M207 519h1M211 519h1M216 519h1M225 519h1M229 519h1M233 519h1M237 519h1M246 519h1M250 519h1M254 519h1M342 519h1M346 519h1M350 519h1M354 519h1M363 519h1M367 519h1M371 519h1M375 519h1M384 519h1M389 519h1M211 520h1M216 520h1M225 520h1M229 520h1M233 520h1M237 520h1M245 520h1M250 520h1M254 520h1M257 520h1M342 520h1M346 520h1M350 520h1M355 520h1M363 520h1M367 520h1M371 520h1M376 520h1M385 520h1M389 520h1M215 521h1M224 521h1M229 521h1M233 521h1M237 521h1M245 521h1M249 521h1M254 521h1M257 521h1M265 521h1M331 521h1M335 521h1M342 521h1M346 521h1M351 521h1M355 521h1M363 521h1M367 521h1M372 521h1M376 521h1M385 521h1M215 522h1M224 522h1M228 522h1M233 522h1M236 522h1M245 522h1M249 522h1M253 522h1M257 522h1M265 522h1M269 522h1M273 522h1M323 522h1M327 522h1M331 522h1M335 522h1M343 522h1M347 522h1M351 522h1M355 522h1M364 522h1M367 522h1M372 522h1M376 522h1M224 523h1M228 523h1M232 523h1M236 523h1M245 523h1M249 523h1M253 523h1M257 523h1M265 523h1M269 523h1M273 523h1M277 523h1M285 523h1M311 523h1M315 523h1M323 523h1M327 523h1M331 523h1M335 523h1M343 523h1M347 523h1M351 523h1M355 523h1M364 523h1M368 523h1M372 523h1M377 523h1M223 524h1M228 524h1M232 524h1M236 524h1M244 524h1M249 524h1M253 524h1M256 524h1M265 524h1M269 524h1M273 524h1M277 524h1M285 524h1M289 524h1M293 524h1M297 524h1M303 524h1M307 524h1M311 524h1M315 524h1M323 524h1M327 524h1M331 524h1M335 524h1M343 524h1M347 524h1M351 524h1M356 524h1M364 524h1M368 524h1M373 524h1M377 524h1M223 525h1M227 525h1M232 525h1M236 525h1M244 525h1M248 525h1M253 525h1M256 525h1M264 525h1M269 525h1M273 525h1M277 525h1M285 525h1M289 525h1M293 525h1M297 525h1M303 525h1M307 525h1M311 525h1M315 525h1M323 525h1M327 525h1M332 525h1M336 525h1M343 525h1M347 525h1M352 525h1M356 525h1M364 525h1M368 525h1M373 525h1M227 526h1M231 526h1M235 526h1M244 526h1M248 526h1M252 526h1M256 526h1M264 526h1M268 526h1M272 526h1M277 526h1M285 526h1M289 526h1M293 526h1M297 526h1M303 526h1M307 526h1M311 526h1M315 526h1M324 526h1M328 526h1M332 526h1M336 526h1M344 526h1M348 526h1M352 526h1M356 526h1M365 526h1M369 526h1M231 527h1M235 527h1M244 527h1M248 527h1M252 527h1M256 527h1M264 527h1M268 527h1M272 527h1M277 527h1M285 527h1M289 527h1M293 527h1M297 527h1M303 527h1M307 527h1M311 527h1M315 527h1M324 527h1M328 527h1M332 527h1M336 527h1M344 527h1M348 527h1M352 527h1M356 527h1M365 527h1M369 527h1M235 528h1M244 528h1M248 528h1M252 528h1M256 528h1M264 528h1M268 528h1M272 528h1M277 528h1M285 528h1M289 528h1M293 528h1M297 528h1M303 528h1M307 528h1M311 528h1M315 528h1M324 528h1M328 528h1M332 528h1M336 528h1M344 528h1M348 528h1M352 528h1M357 528h1M365 528h1M243 529h1M248 529h1M252 529h1M256 529h1M264 529h1M268 529h1M272 529h1M277 529h1M285 529h1M289 529h1M293 529h1M297 529h1M303 529h1M307 529h1M311 529h1M315 529h1M324 529h1M328 529h1M332 529h1M336 529h1M344 529h1M348 529h1M353 529h1M357 529h1M243 530h1M247 530h1M251 530h1M255 530h1M264 530h1M268 530h1M272 530h1M276 530h1M284 530h1M289 530h1M293 530h1M297 530h1M303 530h1M307 530h1M312 530h1M316 530h1M324 530h1M328 530h1M332 530h1M336 530h1M344 530h1M349 530h1M353 530h1M357 530h1M243 531h1M247 531h1M251 531h1M255 531h1M264 531h1M268 531h1M272 531h1M276 531h1M284 531h1M288 531h1M292 531h1M296 531h1M304 531h1M308 531h1M312 531h1M316 531h1M324 531h1M328 531h1M332 531h1M337 531h1M345 531h1M349 531h1M353 531h1M247 532h1M251 532h1M255 532h1M263 532h1M267 532h1M272 532h1M276 532h1M284 532h1M288 532h1M292 532h1M296 532h1M304 532h1M308 532h1M312 532h1M316 532h1M324 532h1M328 532h1M333 532h1M337 532h1M345 532h1M349 532h1M255 533h1M263 533h1M267 533h1M271 533h1M276 533h1M284 533h1M288 533h1M292 533h1M296 533h1M304 533h1M308 533h1M312 533h1M316 533h1M325 533h1M329 533h1M333 533h1M337 533h1M345 533h1M263 534h1M267 534h1M271 534h1M276 534h1M284 534h1M288 534h1M292 534h1M296 534h1M304 534h1M308 534h1M312 534h1M316 534h1M325 534h1M329 534h1M333 534h1M337 534h1M263 535h1M267 535h1M271 535h1M276 535h1M284 535h1M288 535h1M292 535h1M296 535h1M304 535h1M308 535h1M312 535h1M316 535h1M325 535h1M329 535h1M333 535h1M271 536h1M276 536h1M284 536h1M288 536h1M292 536h1M296 536h1M304 536h1M308 536h1M312 536h1M316 536h1M325 536h1M329 536h1M284 537h1M288 537h1M292 537h1M296 537h1M304 537h1M308 537h1M312 537h1M316 537h1"/>
<path stroke="#fff" d="M298 61h1M318 61h1M278 62h1M298 62h1M318 62h1M278 63h1M298 63h1M318 63h1M257 64h1M278 64h1M298 64h1M318 64h1M339 64h1M257 65h1M278 65h1M298 65h1M318 65h1M339 65h1M257 66h1M278 66h1M298 66h1M318 66h1M339 66h1M257 67h1M278 67h1M298 67h1M318 67h1M339 67h1M258 68h1M278 68h1M299 68h1M317 68h1M338 68h1M359 68h1M237 69h1M258 69h1M279 69h1M299 69h1M317 69h1M338 69h1M359 69h1M237 70h1M258 70h1M279 70h1M299 70h1M317 70h1M338 70h1M359 70h1M237 71h1M258 71h1M279 71h1M299 71h1M317 71h1M338 71h1M358 71h1M238 72h1M258 72h1M279 72h1M299 72h1M317 72h1M338 72h1M358 72h1M238 73h1M258 73h1M279 73h1M299 73h1M317 73h1M338 73h1M358 73h1M238 74h1M258 74h1M279 74h1M299 74h1M317 74h1M337 74h1M358 74h1M217 75h1M238 75h1M259 75h1M279 75h1M317 75h1M337 75h1M357 75h1M379 75h1M217 76h1M239 76h1M259 76h1M337 76h1M357 76h1M379 76h1M218 77h1M239 77h1M259 77h1M337 77h1M357 77h1M378 77h1M218 78h1M239 78h1M259 78h1M357 78h1M378 78h1M219 79h1M239 79h1M357 79h1M378 79h1M219 80h1M240 80h1M356 80h1M377 80h1M219 81h1M240 81h1M356 81h1M377 81h1M220 82h1M240 82h1M356 82h1M377 82h1M399 82h1M198 83h1M220 83h1M376 83h1M399 83h1M198 84h1M220 84h1M376 84h1M398 84h1M199 85h1M221 85h1M376 85h1M398 85h1M199 86h1M221 86h1M375 86h1M397 86h1M200 87h1M222 87h1M375 87h1M397 87h1M200 88h1M222 88h1M396 88h1M200 89h1M396 89h1M201 90h1M395 90h1M201 91h1M395 91h1M201 92h1M394 92h1M417 92h1M179 93h1M202 93h1M394 93h1M416 93h1M180 94h1M202 94h1M393 94h1M416 94h1M180 95h1M203 95h1M393 95h1M415 95h1M181 96h1M203 96h1M415 96h1M181 97h1M414 97h1M182 98h1M413 98h1M183 99h1M413 99h1M183 100h1M412 100h1M184 101h1M412 101h1M184 102h1M411 102h1M185 103h1M411 103h1M435 103h1M162 104h1M185 104h1M410 104h1M434 104h1M163 105h1M186 105h1M434 105h1M163 106h1M433 106h1M164 107h1M432 107h1M164 108h1M431 108h1M165 109h1M431 109h1M166 110h1M430 110h1M166 111h1M429 111h1M167 112h1M428 112h1M167 113h1M428 113h1M168 114h1M427 114h1M168 115h1M169 116h1M451 116h1M145 117h1M450 117h1M146 118h1M449 118h1M147 119h1M449 119h1M147 120h1M448 120h1M148 121h1M447 121h1M149 122h1M446 122h1M150 123h1M445 123h1M151 124h1M445 124h1M152 125h1M444 125h1M152 126h1M443 126h1M153 127h1M154 128h1M467 130h1M130 131h1M466 131h1M131 132h1M465 132h1M132 133h1M464 133h1M133 134h1M462 134h2M134 135h1M461 135h1M135 136h1M460 136h1M135 137h1M459 137h1M136 138h1M458 138h1M137 139h1M457 139h1M138 140h1M139 141h1M481 145h1M480 146h1M116 147h1M478 147h2M117 148h1M477 148h1M118 149h2M476 149h1M120 150h1M475 150h1M121 151h1M474 151h1M122 152h1M472 152h2M123 153h2M471 153h1M125 154h1M470 154h1M126 155h1M494 162h1M103 163h1M492 163h2M104 164h2M490 164h2M106 165h1M488 165h2M107 166h1M487 166h1M108 167h2M485 167h2M110 168h1M483 168h2M111 169h1M482 169h1M112 170h2M114 171h1M505 179h1M503 180h2M92 181h1M501 181h2M93 182h2M499 182h2M95 183h2M498 183h1M97 184h1M496 184h2M98 185h2M494 185h2M100 186h2M493 186h1M102 187h2M104 188h1M514 198h2M82 199h2M512 199h2M84 200h2M509 200h3M86 201h2M506 201h3M88 202h2M504 202h2M90 203h2M502 203h2M92 204h2M94 205h2M522 217h2M520 218h2M75 219h2M517 219h3M77 220h3M514 220h3M80 221h3M512 221h2M83 222h3M510 222h2M86 223h2M527 237h3M523 238h4M68 239h3M519 239h4M71 240h4M516 240h3M75 241h5M80 242h3M531 257h4M524 258h7M64 259h4M520 259h4M68 260h6M74 261h4M530 278h7M523 279h7M61 280h7M68 281h8M531 298h7M68 299h7M524 299h7M61 300h7M523 317h7M530 318h8M69 319h7M62 320h7M521 337h4M525 338h6M75 339h4M531 339h4M68 340h7M64 341h4M516 356h3M519 357h4M80 358h3M523 358h5M76 359h4M528 359h3M72 360h4M69 361h3M511 375h2M87 376h2M513 376h3M85 377h2M516 377h3M82 378h3M519 378h3M79 379h3M522 379h2M77 380h2M75 381h2M503 393h2M505 394h2M95 395h2M507 395h2M93 396h2M509 396h2M90 397h3M511 397h2M87 398h3M513 398h2M85 399h2M515 399h2M83 400h2M494 410h1M495 411h2M105 412h1M497 412h2M103 413h2M499 413h1M101 414h2M500 414h2M99 415h2M502 415h2M98 416h1M504 416h2M96 417h2M506 417h1M94 418h2M93 419h1M484 427h1M485 428h2M116 429h1M487 429h1M114 430h2M488 430h1M112 431h2M489 431h2M110 432h2M491 432h1M109 433h1M492 433h1M107 434h2M493 434h2M105 435h2M495 435h1M104 436h1M472 443h1M128 444h1M473 444h1M127 445h1M474 445h2M125 446h2M476 446h1M124 447h1M477 447h1M123 448h1M478 448h1M122 449h1M479 449h2M121 450h1M481 450h1M119 451h2M482 451h1M118 452h1M117 453h1M459 457h1M460 458h1M141 459h1M461 459h1M140 460h1M462 460h1M139 461h1M463 461h1M138 462h1M464 462h1M136 463h2M464 463h1M135 464h1M465 464h1M134 465h1M466 465h1M133 466h1M467 466h1M132 467h1M468 467h1M131 468h1M444 470h1M445 471h1M155 472h1M446 472h1M154 473h1M446 473h1M153 474h1M447 474h1M153 475h1M448 475h1M152 476h1M449 476h1M151 477h1M450 477h1M150 478h1M451 478h1M149 479h1M451 479h1M149 480h1M452 480h1M148 481h1M453 481h1M147 482h1M429 482h1M430 483h1M171 484h1M430 484h1M170 485h1M431 485h1M170 486h1M431 486h1M169 487h1M432 487h1M168 488h1M433 488h1M167 489h1M433 489h1M167 490h1M434 490h1M166 491h1M434 491h1M165 492h1M435 492h1M164 493h1M412 493h1M435 493h1M164 494h1M188 494h1M413 494h1M436 494h1M163 495h1M187 495h1M413 495h1M187 496h1M414 496h1M186 497h1M414 497h1M186 498h1M415 498h1M185 499h1M416 499h1M184 500h1M416 500h1M184 501h1M417 501h1M183 502h1M395 502h1M417 502h1M183 503h1M205 503h1M395 503h1M418 503h1M182 504h1M205 504h1M396 504h1M418 504h1M182 505h1M204 505h1M396 505h1M419 505h1M181 506h1M204 506h1M397 506h1M203 507h1M397 507h1M203 508h1M397 508h1M202 509h1M398 509h1M202 510h1M376 510h1M398 510h1M201 511h1M223 511h1M376 511h1M398 511h1M201 512h1M223 512h1M377 512h1M399 512h1M200 513h1M222 513h1M377 513h1M399 513h1M200 514h1M222 514h1M378 514h1M400 514h1M199 515h1M222 515h1M378 515h1M400 515h1M199 516h1M221 516h1M242 516h1M358 516h1M378 516h1M221 517h1M242 517h1M358 517h1M379 517h1M221 518h1M242 518h1M358 518h1M379 518h1M220 519h1M241 519h1M359 519h1M379 519h1M220 520h1M241 520h1M339 520h1M359 520h1M380 520h1M220 521h1M241 521h1M261 521h1M339 521h1M359 521h1M380 521h1M219 522h1M241 522h1M261 522h1M339 522h1M359 522h1M381 522h1M219 523h1M240 523h1M261 523h1M281 523h1M319 523h1M339 523h1M360 523h1M381 523h1M240 524h1M261 524h1M281 524h1M299 524h1M319 524h1M340 524h1M360 524h1M240 525h1M260 525h1M281 525h1M299 525h1M319 525h1M340 525h1M360 525h1M240 526h1M260 526h1M281 526h1M299 526h1M319 526h1M340 526h1M360 526h1M240 527h1M260 527h1M281 527h1M299 527h1M319 527h1M340 527h1M361 527h1M239 528h1M260 528h1M281 528h1M299 528h1M319 528h1M340 528h1M361 528h1M239 529h1M260 529h1M281 529h1M299 529h1M319 529h1M340 529h1M361 529h1M239 530h1M260 530h1M280 530h1M299 530h1M320 530h1M340 530h1M259 531h1M280 531h1M300 531h1M320 531h1M341 531h1M259 532h1M280 532h1M300 532h1M320 532h1M341 532h1M259 533h1M280 533h1M300 533h1M320 533h1M341 533h1M259 534h1M280 534h1M300 534h1M320 534h1M341 534h1M280 535h1M300 535h1M320 535h1M280 536h1M300 536h1M320 536h1M280 537h1M300 537h1"/>
<path stroke="#fff" d="M285 15h28M275 16h10M313 16h10M265 17h10M323 17h10M255 18h10M333 18h10M248 19h7M343 19h8M243 20h5M351 20h5M238 21h5M356 21h5M234 22h4M361 22h4M230 23h4M365 23h4M226 24h4M369 24h3M223 25h3M372 25h4M220 26h3M376 26h3M217 27h3M379 27h3M214 28h3M382 28h3M211 29h3M385 29h3M207 30h4M388 30h3M204 31h3M391 31h4M201 32h3M395 32h3M199 33h2M398 33h2M197 34h2M400 34h2M195 35h2M402 35h2M192 36h3M404 36h3M190 37h2M407 37h2M188 38h2M409 38h2M186 39h2M411 39h2M183 40h3M413 40h3M181 41h2M416 41h2M179 42h2M418 42h2M177 43h2M420 43h2M174 44h3M422 44h3M172 45h2M425 45h2M170 46h2M427 46h2M168 47h2M429 47h2M166 48h2M431 48h2M164 49h2M433 49h2M162 50h2M435 50h2M160 51h2M437 51h2M158 52h2M439 52h2M157 53h1M441 53h1M155 54h2M442 54h2M153 55h2M444 55h1M152 56h1M445 56h2M150 57h2M447 57h2M149 58h1M449 58h1M147 59h2M450 59h2M146 60h1M452 60h1M144 61h2M453 61h2M143 62h1M455 62h1M141 63h2M456 63h2M140 64h1M458 64h1M138 65h2M459 65h2M136 66h2M461 66h1M135 67h1M462 67h2M133 68h2M464 68h2M132 69h1M466 69h1M130 70h2M467 70h1M129 71h1M468 71h2M128 72h1M470 72h1M126 73h2M471 73h1M125 74h1M472 74h2M124 75h1M474 75h1M123 76h1M475 76h1M122 77h1M476 77h1M121 78h1M477 78h1M120 79h1M478 79h1M119 80h1M479 80h1M118 81h1M480 81h1M117 82h1M481 82h1M115 83h2M482 83h1M114 84h1M483 84h2M113 85h1M485 85h1M111 86h2M486 86h1M110 87h1M487 87h2M109 88h1M489 88h1M108 89h1M490 89h1M107 90h1M491 90h1M106 91h1M492 91h1M105 92h1M493 92h1M104 93h1M494 93h1M103 94h1M495 94h1M102 95h1M496 95h1M101 96h1M497 96h1M100 97h1M498 97h1M99 98h1M499 98h1M98 99h1M500 99h1M97 100h1M501 100h1M96 101h1M502 101h1M95 102h1M503 102h1M94 103h1M504 103h1M93 104h1M505 104h1M92 105h1M506 105h1M91 106h1M507 106h1M90 107h1M508 107h1M89 108h1M509 108h1M88 109h1M510 109h1M87 110h1M511 110h1M86 111h1M512 111h1M86 112h1M512 112h1M85 113h1M513 113h1M84 114h1M514 114h1M83 115h1M515 115h1M83 116h1M515 116h1M82 117h1M516 117h1M81 118h1M517 118h1M80 119h1M518 119h1M79 120h1M519 120h1M78 121h1M520 121h1M77 122h1M521 122h1M76 123h1M522 123h1M75 124h1M523 124h1M74 125h1M524 125h1M73 126h1M525 126h1M73 127h1M525 127h1M72 128h1M526 128h1M71 129h1M527 129h1M70 130h1M528 130h1M70 131h1M528 131h1M69 132h1M529 132h1M68 133h1M530 133h1M68 134h1M530 134h1M67 135h1M531 135h1M66 136h1M532 136h1M66 137h1M532 137h1M65 138h1M533 138h1M65 139h1M533 139h1M64 140h1M534 140h1M63 141h1M535 141h1M63 142h1M535 142h1M62 143h1M536 143h1M61 144h1M537 144h1M61 145h1M537 145h1M60 146h1M538 146h1M59 147h1M539 147h1M59 148h1M539 148h1M58 149h1M540 149h1M57 150h1M541 150h1M57 151h1M541 151h1M56 152h1M542 152h1M55 153h1M543 153h1M55 154h1M543 154h1M54 155h1M544 155h1M54 156h1M544 156h1M53 157h1M545 157h1M52 158h1M546 158h1M52 159h1M546 159h1M51 160h1M547 160h1M51 161h1M547 161h1M50 162h1M548 162h1M50 163h1M548 163h1M49 164h1M549 164h1M49 165h1M549 165h1M48 166h1M550 166h1M48 167h1M550 167h1M47 168h1M551 168h1M47 169h1M551 169h1M46 170h1M552 170h1M46 171h1M552 171h1M45 172h1M553 172h1M45 173h1M553 173h1M44 174h1M554 174h1M44 175h1M554 175h1M44 176h1M554 176h1M43 177h1M555 177h1M43 178h1M555 178h1M42 179h1M556 179h1M42 180h1M556 180h1M41 181h1M557 181h1M41 182h1M557 182h1M40 183h1M558 183h1M40 184h1M558 184h1M40 185h1M558 185h1M39 186h1M559 186h1M39 187h1M559 187h1M38 188h1M560 188h1M38 189h1M560 189h1M37 190h1M561 190h1M37 191h1M561 191h1M36 192h1M562 192h1M36 193h1M562 193h1M36 194h1M562 194h1M35 195h1M563 195h1M35 196h1M563 196h1M34 197h1M564 197h1M34 198h1M564 198h1M33 199h1M565 199h1M33 200h1M565 200h1M32 201h1M566 201h1M32 202h1M566 202h1M32 203h1M566 203h1M31 204h1M567 204h1M31 205h1M567 205h1M31 206h1M567 206h1M30 207h1M568 207h1M30 208h1M568 208h1M30 209h1M568 209h1M30 210h1M568 210h1M29 211h1M569 211h1M29 212h1M569 212h1M29 213h1M569 213h1M28 214h1M570 214h1M28 215h1M570 215h1M28 216h1M570 216h1M27 217h1M571 217h1M27 218h1M571 218h1M27 219h1M571 219h1M26 220h1M572 220h1M26 221h1M572 221h1M26 222h1M572 222h1M25 223h1M573 223h1M25 224h1M573 224h1M25 225h1M573 225h1M24 226h1M574 226h1M24 227h1M574 227h1M24 228h1M574 228h1M24 229h1M574 229h1M23 230h1M575 230h1M23 231h1M575 231h1M23 232h1M575 232h1M23 233h1M575 233h1M22 234h1M576 234h1M22 235h1M576 235h1M22 236h1M576 236h1M22 237h1M576 237h1M21 238h1M577 238h1M21 239h1M577 239h1M21 240h1M577 240h1M21 241h1M577 241h1M21 242h1M577 242h1M20 243h1M578 243h1M20 244h1M578 244h1M20 245h1M578 245h1M20 246h1M578 246h1M20 247h1M578 247h1M19 248h1M579 248h1M19 249h1M579 249h1M19 250h1M579 250h1M19 251h1M579 251h1M19 252h1M579 252h1M19 253h1M579 253h1M19 254h1M579 254h1M18 255h1M580 255h1M18 256h1M580 256h1M18 257h1M580 257h1M18 258h1M580 258h1M18 259h1M580 259h1M18 260h1M580 260h1M18 261h1M580 261h1M18 262h1M580 262h1M18 263h1M580 263h1M18 264h1M580 264h1M17 265h1M581 265h1M17 266h1M581 266h1M17 267h1M581 267h1M17 268h1M581 268h1M17 269h1M581 269h1M17 270h1M581 270h1M17 271h1M581 271h1M17 272h1M581 272h1M17 273h1M581 273h1M17 274h1M581 274h1M16 275h1M582 275h1M16 276h1M582 276h1M16 277h1M582 277h1M16 278h1M582 278h1M16 279h1M582 279h1M16 280h1M582 280h1M16 281h1M582 281h1M16 282h1M582 282h1M16 283h1M582 283h1M16 284h1M582 284h1M15 285h1M583 285h1M15 286h1M583 286h1M15 287h1M583 287h1M15 288h1M583 288h1M15 289h1M583 289h1M15 290h1M583 290h1M15 291h1M583 291h1M15 292h1M583 292h1M15 293h1M583 293h1M15 294h1M583 294h1M15 295h1M583 295h1M15 296h1M583 296h1M15 297h1M583 297h1M15 298h1M583 298h1M15 299h1M583 299h1M15 300h1M583 300h1M15 301h1M583 301h1M15 302h1M583 302h1M15 303h1M583 303h1M15 304h1M583 304h1M15 305h1M583 305h1M15 306h1M583 306h1M15 307h1M583 307h1M15 308h1M583 308h1M15 309h1M583 309h1M15 310h1M583 310h1M15 311h1M583 311h1M15 312h1M583 312h1M16 313h1M582 313h1M16 314h1M582 314h1M16 315h1M582 315h1M16 316h1M582 316h1M16 317h1M582 317h1M16 318h1M582 318h1M16 319h1M582 319h1M16 320h1M582 320h1M16 321h1M582 321h1M16 322h1M582 322h1M17 323h1M581 323h1M17 324h1M581 324h1M17 325h1M581 325h1M17 326h1M581 326h1M17 327h1M581 327h1M17 328h1M581 328h1M17 329h1M581 329h1M17 330h1M581 330h1M17 331h1M581 331h1M17 332h1M581 332h1M18 333h1M580 333h1M18 334h1M580 334h1M18 335h1M580 335h1M18 336h1M580 336h1M18 337h1M580 337h1M18 338h1M580 338h1M18 339h1M580 339h1M18 340h1M580 340h1M18 341h1M580 341h1M18 342h1M580 342h1M19 343h1M579 343h1M19 344h1M579 344h1M19 345h1M579 345h1M19 346h1M579 346h1M19 347h1M579 347h1M19 348h1M579 348h1M19 349h1M579 349h1M19 350h1M579 350h1M20 351h1M578 351h1M20 352h1M578 352h1M20 353h1M578 353h1M20 354h1M578 354h1M20 355h1M578 355h1M21 356h1M577 356h1M21 357h1M577 357h1M21 358h1M577 358h1M21 359h1M577 359h1M21 360h1M577 360h1M22 361h1M576 361h1M22 362h1M576 362h1M22 363h1M576 363h1M22 364h1M576 364h1M23 365h1M575 365h1M23 366h1M575 366h1M23 367h1M575 367h1M23 368h1M575 368h1M24 369h1M574 369h1M24 370h1M574 370h1M24 371h1M574 371h1M25 372h1M573 372h1M25 373h1M573 373h1M25 374h1M573 374h1M25 375h1M573 375h1M26 376h1M572 376h1M26 377h1M572 377h1M26 378h1M572 378h1M27 379h1M571 379h1M27 380h1M571 380h1M27 381h1M571 381h1M28 382h1M570 382h1M28 383h1M570 383h1M28 384h1M570 384h1M29 385h1M569 385h1M29 386h1M569 386h1M29 387h1M569 387h1M30 388h1M568 388h1M30 389h1M568 389h1M30 390h1M568 390h1M31 391h1M567 391h1M31 392h1M567 392h1M31 393h1M567 393h1M31 394h1M567 394h1M32 395h1M566 395h1M32 396h1M566 396h1M32 397h1M566 397h1M33 398h1M565 398h1M33 399h1M565 399h1M34 400h1M564 400h1M34 401h1M564 401h1M35 402h1M563 402h1M35 403h1M563 403h1M36 404h1M562 404h1M36 405h1M562 405h1M36 406h1M562 406h1M37 407h1M561 407h1M37 408h1M561 408h1M38 409h1M560 409h1M38 410h1M560 410h1M39 411h1M559 411h1M39 412h1M559 412h1M40 413h1M558 413h1M40 414h1M558 414h1M40 415h1M558 415h1M41 416h1M557 416h1M41 417h1M557 417h1M42 418h1M556 418h1M42 419h1M556 419h1M43 420h1M555 420h1M43 421h1M555 421h1M44 422h1M554 422h1M44 423h1M554 423h1M44 424h1M554 424h1M45 425h1M553 425h1M45 426h1M553 426h1M46 427h1M552 427h1M46 428h1M552 428h1M47 429h1M551 429h1M47 430h1M551 430h1M48 431h1M550 431h1M48 432h1M550 432h1M49 433h1M549 433h1M49 434h1M549 434h1M50 435h1M548 435h1M50 436h1M548 436h1M51 437h1M547 437h1M51 438h1M547 438h1M52 439h1M546 439h1M52 440h1M546 440h1M53 441h1M545 441h1M54 442h1M544 442h1M54 443h1M544 443h1M55 444h1M543 444h1M56 445h1M542 445h1M56 446h1M542 446h1M57 447h1M541 447h1M57 448h1M541 448h1M58 449h1M540 449h1M59 450h1M539 450h1M59 451h1M539 451h1M60 452h1M538 452h1M61 453h1M537 453h1M61 454h1M537 454h1M62 455h1M536 455h1M63 456h1M535 456h1M63 457h1M535 457h1M64 458h1M534 458h1M65 459h1M533 459h1M65 460h1M533 460h1M66 461h1M532 461h1M67 462h1M531 462h1M67 463h1M531 463h1M68 464h1M530 464h1M68 465h1M530 465h1M69 466h1M529 466h1M70 467h1M528 467h1M71 468h1M527 468h1M71 469h1M527 469h1M72 470h1M526 470h1M73 471h1M525 471h1M74 472h1M524 472h1M74 473h1M524 473h1M75 474h1M523 474h1M76 475h1M522 475h1M77 476h1M521 476h1M78 477h1M520 477h1M79 478h1M519 478h1M80 479h1M518 479h1M81 480h1M517 480h1M82 481h1M516 481h1M83 482h1M515 482h1M84 483h1M514 483h1M84 484h1M514 484h1M85 485h1M513 485h1M86 486h1M512 486h1M87 487h1M511 487h1M87 488h1M511 488h1M88 489h1M510 489h1M89 490h1M509 490h1M90 491h1M508 491h1M91 492h1M507 492h1M92 493h1M506 493h1M93 494h1M505 494h1M94 495h1M504 495h1M95 496h1M503 496h1M96 497h1M502 497h1M97 498h1M501 498h1M98 499h1M500 499h1M99 500h1M499 500h1M100 501h1M498 501h1M101 502h1M497 502h1M102 503h1M496 503h1M103 504h1M495 504h1M104 505h1M494 505h1M105 506h1M493 506h1M106 507h1M492 507h1M107 508h1M491 508h1M108 509h1M490 509h1M109 510h1M489 510h1M110 511h1M487 511h2M111 512h2M486 512h1M113 513h1M485 513h1M114 514h1M483 514h2M115 515h2M482 515h1M117 516h1M481 516h1M118 517h1M480 517h1M119 518h1M479 518h1M120 519h1M478 519h1M121 520h1M477 520h1M122 521h1M476 521h1M123 522h1M475 522h1M124 523h1M474 523h1M125 524h1M472 524h2M126 525h2M471 525h1M128 526h1M470 526h1M129 527h1M468 527h2M130 528h2M467 528h1M132 529h1M466 529h1M133 530h2M464 530h2M135 531h1M462 531h2M136 532h2M461 532h1M138 533h2M459 533h2M140 534h1M458 534h1M141 535h2M456 535h2M143 536h1M455 536h1M144 537h2M453 537h2M146 538h1M452 538h1M147 539h2M450 539h2M149 540h1M449 540h1M150 541h2M447 541h2M152 542h1M445 542h2M153 543h2M444 543h1M155 544h2M442 544h2M157 545h1M441 545h1M158 546h2M439 546h2M160 547h2M437 547h2M162 548h2M435 548h2M164 549h2M433 549h2M166 550h2M431 550h2M168 551h2M429 551h2M170 552h2M427 552h2M172 553h2M425 553h2M174 554h3M422 554h3M177 555h2M420 555h2M179 556h2M418 556h2M181 557h2M416 557h2M183 558h3M413 558h3M186 559h2M411 559h2M188 560h2M409 560h2M190 561h2M407 561h2M192 562h3M404 562h3M195 563h2M402 563h2M197 564h2M400 564h2M199 565h2M398 565h2M201 566h3M395 566h3M204 567h3M391 567h4M207 568h4M388 568h3M211 569h3M385 569h3M214 570h3M382 570h3M217 571h3M379 571h3M220 572h3M376 572h3M223 573h3M372 573h4M226 574h4M369 574h3M230 575h4M365 575h4M234 576h4M361 576h4M238 577h5M356 577h5M243 578h5M351 578h5M248 579h7M343 579h8M255 580h10M333 580h10M265 581h10M323 581h10M275 582h10M313 582h10M285 583h28"/>
<path stroke="#fff" d="M287 60h24M270 61h17M311 61h17M264 62h6M328 62h6M260 63h4M334 63h4M254 64h6M338 64h6M248 65h6M344 65h6M244 66h4M350 66h4M240 67h4M354 67h5M236 68h4M359 68h4M232 69h4M363 69h4M229 70h3M367 70h2M227 71h2M369 71h3M224 72h3M372 72h3M220 73h4M375 73h4M217 74h3M379 74h3M214 75h3M382 75h2M212 76h2M384 76h3M209 77h3M387 77h2M207 78h2M389 78h2M205 79h2M391 79h2M203 80h2M393 80h2M201 81h2M395 81h3M199 82h2M398 82h2M197 83h2M400 83h2M194 84h3M402 84h2M192 85h2M404 85h2M190 86h2M406 86h2M188 87h2M408 87h2M187 88h1M410 88h2M185 89h2M412 89h2M183 90h2M414 90h2M181 91h2M416 91h2M180 92h1M418 92h1M178 93h2M419 93h2M176 94h2M421 94h2M174 95h2M423 95h2M173 96h1M425 96h1M171 97h2M426 97h2M170 98h1M428 98h1M169 99h1M429 99h1M167 100h2M430 100h2M166 101h1M432 101h1M164 102h2M433 102h2M163 103h1M435 103h1M162 104h1M436 104h1M160 105h2M437 105h2M159 106h1M439 106h1M157 107h2M440 107h2M156 108h1M442 108h1M155 109h1M443 109h1M153 110h2M444 110h2M152 111h1M446 111h1M151 112h1M447 112h1M149 113h2M448 113h1M148 114h1M449 114h2M147 115h1M451 115h1M146 116h1M452 116h1M145 117h1M453 117h1M144 118h1M454 118h1M142 119h2M455 119h2M141 120h1M457 120h1M140 121h1M458 121h1M139 122h1M459 122h1M138 123h1M460 123h1M136 124h2M461 124h1M135 125h1M462 125h2M134 126h1M464 126h1M133 127h1M465 127h1M132 128h1M466 128h1M131 129h1M467 129h1M130 130h1M468 130h1M129 131h1M469 131h1M128 132h1M470 132h1M127 133h1M471 133h1M126 134h1M472 134h1M125 135h1M473 135h1M124 136h1M474 136h1M124 137h1M474 137h1M123 138h1M475 138h1M122 139h1M476 139h1M121 140h1M477 140h1M120 141h1M478 141h1M119 142h1M479 142h1M119 143h1M479 143h1M118 144h1M480 144h1M117 145h1M481 145h1M116 146h1M482 146h1M115 147h1M483 147h1M114 148h1M484 148h1M113 149h1M485 149h1M113 150h1M485 150h1M112 151h1M486 151h1M111 152h1M487 152h1M110 153h1M488 153h1M110 154h1M488 154h1M109 155h1M489 155h1M108 156h1M490 156h1M107 157h1M491 157h1M107 158h1M491 158h1M106 159h1M492 159h1M105 160h1M493 160h1M105 161h1M493 161h1M104 162h1M494 162h1M103 163h1M495 163h1M102 164h1M496 164h1M102 165h1M496 165h1M101 166h1M497 166h1M100 167h1M498 167h1M100 168h1M498 168h1M99 169h1M499 169h1M98 170h1M500 170h1M97 171h1M501 171h1M97 172h1M501 172h1M96 173h1M502 173h1M95 174h1M503 174h1M95 175h1M503 175h1M94 176h1M504 176h1M94 177h1M504 177h1M93 178h1M505 178h1M93 179h1M505 179h1M92 180h1M506 180h1M91 181h1M507 181h1M91 182h1M507 182h1M90 183h1M508 183h1M90 184h1M508 184h1M89 185h1M509 185h1M89 186h1M509 186h1M88 187h1M510 187h1M87 188h1M511 188h1M87 189h1M511 189h1M86 190h1M512 190h1M86 191h1M512 191h1M85 192h1M513 192h1M85 193h1M513 193h1M84 194h1M514 194h1M84 195h1M514 195h1M84 196h1M514 196h1M83 197h1M515 197h1M83 198h1M515 198h1M82 199h1M516 199h1M82 200h1M516 200h1M81 201h1M517 201h1M81 202h1M517 202h1M80 203h1M518 203h1M80 204h1M518 204h1M79 205h1M519 205h1M79 206h1M519 206h1M78 207h1M520 207h1M78 208h1M520 208h1M77 209h1M521 209h1M77 210h1M521 210h1M77 211h1M521 211h1M76 212h1M522 212h1M76 213h1M522 213h1M75 214h1M523 214h1M75 215h1M523 215h1M75 216h1M523 216h1M74 217h1M524 217h1M74 218h1M524 218h1M74 219h1M524 219h1M73 220h1M525 220h1M73 221h1M525 221h1M73 222h1M525 222h1M73 223h1M525 223h1M72 224h1M526 224h1M72 225h1M526 225h1M72 226h1M526 226h1M71 227h1M527 227h1M71 228h1M527 228h1M70 229h1M528 229h1M70 230h1M528 230h1M70 231h1M528 231h1M69 232h1M529 232h1M69 233h1M529 233h1M69 234h1M529 234h1M69 235h1M529 235h1M68 236h1M530 236h1M68 237h1M530 237h1M68 238h1M530 238h1M68 239h1M530 239h1M67 240h1M531 240h1M67 241h1M531 241h1M67 242h1M531 242h1M67 243h1M531 243h1M66 244h1M532 244h1M66 245h1M532 245h1M66 246h1M532 246h1M66 247h1M532 247h1M65 248h1M533 248h1M65 249h1M533 249h1M65 250h1M533 250h1M65 251h1M533 251h1M65 252h1M533 252h1M65 253h1M533 253h1M64 254h1M534 254h1M64 255h1M534 255h1M64 256h1M534 256h1M64 257h1M534 257h1M64 258h1M534 258h1M64 259h1M534 259h1M63 260h1M535 260h1M63 261h1M535 261h1M63 262h1M535 262h1M63 263h1M535 263h1M62 264h1M536 264h1M62 265h1M536 265h1M62 266h1M536 266h1M62 267h1M536 267h1M62 268h1M536 268h1M62 269h1M536 269h1M61 270h1M537 270h1M61 271h1M537 271h1M61 272h1M537 272h1M61 273h1M537 273h1M61 274h1M537 274h1M61 275h1M537 275h1M61 276h1M537 276h1M61 277h1M537 277h1M61 278h1M537 278h1M61 279h1M537 279h1M61 280h1M537 280h1M61 281h1M537 281h1M61 282h1M537 282h1M61 283h1M537 283h1M61 284h1M537 284h1M61 285h1M537 285h1M61 286h1M537 286h1M60 287h1M538 287h1M60 288h1M538 288h1M60 289h1M538 289h1M60 290h1M538 290h1M60 291h1M538 291h1M60 292h1M538 292h1M60 293h1M538 293h1M60 294h1M538 294h1M60 295h1M538 295h1M60 296h1M538 296h1M60 297h1M538 297h1M60 298h1M538 298h1M60 299h1M538 299h1M60 300h1M538 300h1M60 301h1M538 301h1M60 302h1M538 302h1M60 303h1M538 303h1M60 304h1M538 304h1M60 305h1M538 305h1M60 306h1M538 306h1M60 307h1M538 307h1M60 308h1M538 308h1M60 309h1M538 309h1M60 310h1M538 310h1M61 311h1M537 311h1M61 312h1M537 312h1M61 313h1M537 313h1M61 314h1M537 314h1M61 315h1M537 315h1M61 316h1M537 316h1M61 317h1M537 317h1M61 318h1M537 318h1M61 319h1M537 319h1M61 320h1M537 320h1M61 321h1M537 321h1M61 322h1M537 322h1M61 323h1M537 323h1M61 324h1M537 324h1M61 325h1M537 325h1M61 326h1M537 326h1M61 327h1M537 327h1M62 328h1M536 328h1M62 329h1M536 329h1M62 330h1M536 330h1M62 331h1M536 331h1M62 332h1M536 332h1M62 333h1M536 333h1M63 334h1M535 334h1M63 335h1M535 335h1M63 336h1M535 336h1M63 337h1M535 337h1M64 338h1M534 338h1M64 339h1M534 339h1M64 340h1M534 340h1M64 341h1M534 341h1M64 342h1M534 342h1M64 343h1M534 343h1M65 344h1M533 344h1M65 345h1M533 345h1M65 346h1M533 346h1M65 347h1M533 347h1M65 348h1M533 348h1M65 349h1M533 349h1M66 350h1M532 350h1M66 351h1M532 351h1M66 352h1M532 352h1M66 353h1M532 353h1M67 354h1M531 354h1M67 355h1M531 355h1M67 356h1M531 356h1M67 357h1M531 357h1M67 358h1M531 358h1M68 359h1M530 359h1M68 360h1M530 360h1M68 361h1M530 361h1M68 362h1M530 362h1M69 363h1M529 363h1M69 364h1M529 364h1M69 365h1M529 365h1M69 366h1M529 366h1M70 367h1M528 367h1M70 368h1M528 368h1M71 369h1M527 369h1M71 370h1M527 370h1M71 371h1M527 371h1M72 372h1M526 372h1M72 373h1M526 373h1M72 374h1M526 374h1M73 375h1M525 375h1M73 376h1M525 376h1M73 377h1M525 377h1M73 378h1M525 378h1M74 379h1M524 379h1M74 380h1M524 380h1M74 381h1M524 381h1M75 382h1M523 382h1M75 383h1M523 383h1M76 384h1M522 384h1M76 385h1M522 385h1M76 386h1M522 386h1M77 387h1M521 387h1M77 388h1M521 388h1M78 389h1M520 389h1M78 390h1M520 390h1M79 391h1M519 391h1M79 392h1M519 392h1M80 393h1M518 393h1M80 394h1M518 394h1M81 395h1M517 395h1M81 396h1M517 396h1M81 397h1M517 397h1M82 398h1M516 398h1M82 399h1M516 399h1M83 400h1M515 400h1M83 401h1M515 401h1M84 402h1M514 402h1M84 403h1M514 403h1M85 404h1M513 404h1M85 405h1M513 405h1M86 406h1M512 406h1M86 407h1M512 407h1M87 408h1M511 408h1M87 409h1M511 409h1M88 410h1M510 410h1M88 411h1M510 411h1M89 412h1M509 412h1M89 413h1M509 413h1M90 414h1M508 414h1M90 415h1M508 415h1M91 416h1M507 416h1M91 417h1M507 417h1M92 418h1M506 418h1M93 419h1M505 419h1M93 420h1M505 420h1M94 421h1M504 421h1M94 422h1M504 422h1M95 423h1M503 423h1M95 424h1M503 424h1M96 425h1M502 425h1M97 426h1M501 426h1M97 427h1M501 427h1M98 428h1M500 428h1M99 429h1M499 429h1M100 430h1M498 430h1M100 431h1M498 431h1M101 432h1M497 432h1M102 433h1M496 433h1M102 434h1M496 434h1M103 435h1M495 435h1M104 436h1M494 436h1M105 437h1M493 437h1M105 438h1M493 438h1M106 439h1M492 439h1M107 440h1M491 440h1M107 441h1M491 441h1M108 442h1M490 442h1M109 443h1M489 443h1M110 444h1M488 444h1M110 445h1M488 445h1M111 446h1M487 446h1M112 447h1M486 447h1M113 448h1M485 448h1M114 449h1M484 449h1M114 450h1M484 450h1M115 451h1M483 451h1M116 452h1M482 452h1M117 453h1M481 453h1M118 454h1M480 454h1M119 455h1M479 455h1M119 456h1M479 456h1M120 457h1M478 457h1M121 458h1M477 458h1M122 459h1M476 459h1M123 460h1M475 460h1M124 461h1M474 461h1M125 462h1M473 462h1M125 463h1M473 463h1M126 464h1M472 464h1M127 465h1M471 465h1M128 466h1M470 466h1M129 467h1M469 467h1M130 468h1M468 468h1M131 469h1M467 469h1M132 470h1M466 470h1M133 471h1M465 471h1M134 472h1M464 472h1M135 473h1M462 473h2M136 474h2M461 474h1M138 475h1M460 475h1M139 476h1M459 476h1M140 477h1M458 477h1M141 478h1M457 478h1M142 479h2M455 479h2M144 480h1M454 480h1M145 481h1M453 481h1M146 482h1M452 482h1M147 483h1M451 483h1M148 484h1M449 484h2M149 485h2M448 485h1M151 486h1M447 486h1M152 487h1M446 487h1M153 488h2M444 488h2M155 489h1M443 489h1M156 490h1M442 490h1M157 491h2M440 491h2M159 492h1M439 492h1M160 493h2M437 493h2M162 494h1M436 494h1M163 495h1M435 495h1M164 496h2M433 496h2M166 497h1M432 497h1M167 498h2M430 498h2M169 499h1M429 499h1M170 500h1M428 500h1M171 501h2M426 501h2M173 502h1M425 502h1M174 503h2M423 503h2M176 504h2M421 504h2M178 505h2M419 505h2M180 506h1M418 506h1M181 507h2M416 507h2M183 508h2M414 508h2M185 509h2M412 509h2M187 510h1M410 510h2M188 511h2M408 511h2M190 512h2M406 512h2M192 513h2M404 513h2M194 514h3M402 514h2M197 515h2M400 515h2M199 516h2M398 516h2M201 517h2M395 517h3M203 518h2M393 518h2M205 519h2M391 519h2M207 520h2M389 520h2M209 521h3M387 521h2M212 522h2M384 522h3M214 523h3M382 523h2M217 524h3M379 524h3M220 525h4M375 525h4M224 526h3M372 526h3M227 527h2M369 527h3M229 528h3M367 528h2M232 529h4M363 529h4M236 530h4M359 530h4M240 531h4M354 531h5M244 532h4M350 532h4M248 533h6M344 533h6M254 534h6M338 534h6M260 535h4M334 535h4M264 536h6M328 536h6M270 537h17M311 537h17M287 538h24"/>
<path stroke="#fff" d="M288 75h22M272 76h16M310 76h16M265 77h7M326 77h8M259 78h6M334 78h5M255 79h4M339 79h4M251 80h4M343 80h4M247 81h4M347 81h4M244 82h3M351 82h4M240 83h4M355 83h4M236 84h4M359 84h3M232 85h4M362 85h4M229 86h3M366 86h4M227 87h2M370 87h2M225 88h2M372 88h2M221 89h4M374 89h3M217 90h4M377 90h4M214 91h3M381 91h4M212 92h2M385 92h2M210 93h2M387 93h2M208 94h2M389 94h2M206 95h2M391 95h2M204 96h2M393 96h2M202 97h2M395 97h2M200 98h2M397 98h2M198 99h2M399 99h2M196 100h2M401 100h2M194 101h2M403 101h2M192 102h2M405 102h2M190 103h2M407 103h2M188 104h2M409 104h2M187 105h1M411 105h1M185 106h2M412 106h2M184 107h1M414 107h1M182 108h2M415 108h2M181 109h1M417 109h1M179 110h2M418 110h2M177 111h2M420 111h2M175 112h2M422 112h2M174 113h1M424 113h1M173 114h1M425 114h1M171 115h2M426 115h1M170 116h1M427 116h2M169 117h1M429 117h1M168 118h1M430 118h1M166 119h2M431 119h2M165 120h1M433 120h1M164 121h1M434 121h1M162 122h2M435 122h2M161 123h1M437 123h1M160 124h1M438 124h1M158 125h2M439 125h1M157 126h1M440 126h2M156 127h1M442 127h1M155 128h1M443 128h1M154 129h1M444 129h1M152 130h2M445 130h1M151 131h1M446 131h2M150 132h1M448 132h1M149 133h1M449 133h1M148 134h1M450 134h1M147 135h1M451 135h1M146 136h1M452 136h1M145 137h1M453 137h1M144 138h1M454 138h1M143 139h1M455 139h1M142 140h1M456 140h1M141 141h1M457 141h1M140 142h1M458 142h1M139 143h1M459 143h1M138 144h1M460 144h1M137 145h1M461 145h1M136 146h1M462 146h1M135 147h1M463 147h1M134 148h1M464 148h1M133 149h1M465 149h1M132 150h1M466 150h1M131 151h1M467 151h1M130 152h1M468 152h1M130 153h1M468 153h1M129 154h1M469 154h1M128 155h1M470 155h1M127 156h1M471 156h1M126 157h1M472 157h1M125 158h1M473 158h1M125 159h1M473 159h1M124 160h1M474 160h1M123 161h1M475 161h1M122 162h1M476 162h1M122 163h1M476 163h1M121 164h1M477 164h1M120 165h1M478 165h1M119 166h1M479 166h1M119 167h1M479 167h1M118 168h1M480 168h1M117 169h1M481 169h1M116 170h1M482 170h1M115 171h1M483 171h1M115 172h1M483 172h1M114 173h1M484 173h1M113 174h1M485 174h1M112 175h1M486 175h1M112 176h1M486 176h1M111 177h1M487 177h1M111 178h1M487 178h1M110 179h1M488 179h1M110 180h1M488 180h1M109 181h1M489 181h1M108 182h1M490 182h1M108 183h1M490 183h1M107 184h1M491 184h1M106 185h1M492 185h1M106 186h1M492 186h1M105 187h1M493 187h1M104 188h1M494 188h1M104 189h1M494 189h1M103 190h1M495 190h1M103 191h1M495 191h1M102 192h1M496 192h1M102 193h1M496 193h1M101 194h1M497 194h1M101 195h1M497 195h1M100 196h1M498 196h1M100 197h1M498 197h1M99 198h1M499 198h1M99 199h1M499 199h1M98 200h1M500 200h1M98 201h1M500 201h1M97 202h1M501 202h1M97 203h1M501 203h1M96 204h1M502 204h1M96 205h1M502 205h1M95 206h1M503 206h1M95 207h1M503 207h1M94 208h1M504 208h1M94 209h1M504 209h1M93 210h1M505 210h1M93 211h1M505 211h1M92 212h1M506 212h1M92 213h1M506 213h1M91 214h1M507 214h1M91 215h1M507 215h1M91 216h1M507 216h1M90 217h1M508 217h1M90 218h1M508 218h1M90 219h1M508 219h1M90 220h1M508 220h1M89 221h1M509 221h1M89 222h1M509 222h1M89 223h1M509 223h1M89 224h1M509 224h1M88 225h1M510 225h1M88 226h1M510 226h1M87 227h1M511 227h1M87 228h1M511 228h1M86 229h1M512 229h1M86 230h1M512 230h1M86 231h1M512 231h1M85 232h1M513 232h1M85 233h1M513 233h1M85 234h1M513 234h1M85 235h1M513 235h1M84 236h1M514 236h1M84 237h1M514 237h1M84 238h1M514 238h1M84 239h1M514 239h1M83 240h1M515 240h1M83 241h1M515 241h1M83 242h1M515 242h1M83 243h1M515 243h1M82 244h1M516 244h1M82 245h1M516 245h1M82 246h1M516 246h1M81 247h1M517 247h1M81 248h1M517 248h1M81 249h1M517 249h1M81 250h1M517 250h1M80 251h1M518 251h1M80 252h1M518 252h1M80 253h1M518 253h1M80 254h1M518 254h1M79 255h1M519 255h1M79 256h1M519 256h1M79 257h1M519 257h1M79 258h1M519 258h1M78 259h1M520 259h1M78 260h1M520 260h1M78 261h1M520 261h1M78 262h1M520 262h1M78 263h1M520 263h1M78 264h1M520 264h1M77 265h1M521 265h1M77 266h1M521 266h1M77 267h1M521 267h1M77 268h1M521 268h1M77 269h1M521 269h1M77 270h1M521 270h1M77 271h1M521 271h1M76 272h1M522 272h1M76 273h1M522 273h1M76 274h1M522 274h1M76 275h1M522 275h1M76 276h1M522 276h1M76 277h1M522 277h1M76 278h1M522 278h1M76 279h1M522 279h1M76 280h1M522 280h1M76 281h1M522 281h1M76 282h1M522 282h1M76 283h1M522 283h1M76 284h1M522 284h1M76 285h1M522 285h1M76 286h1M522 286h1M76 287h1M522 287h1M75 288h1M523 288h1M75 289h1M523 289h1M75 290h1M523 290h1M75 291h1M523 291h1M75 292h1M523 292h1M75 293h1M523 293h1M75 294h1M523 294h1M75 295h1M523 295h1M75 296h1M523 296h1M75 297h1M523 297h1M75 298h1M523 298h1M75 299h1M523 299h1M75 300h1M523 300h1M75 301h1M523 301h1M75 302h1M523 302h1M75 303h1M523 303h1M75 304h1M523 304h1M75 305h1M523 305h1M75 306h1M523 306h1M75 307h1M523 307h1M75 308h1M523 308h1M75 309h1M523 309h1M76 310h1M522 310h1M76 311h1M522 311h1M76 312h1M522 312h1M76 313h1M522 313h1M76 314h1M522 314h1M76 315h1M522 315h1M76 316h1M522 316h1M76 317h1M522 317h1M76 318h1M522 318h1M76 319h1M522 319h1M76 320h1M522 320h1M76 321h1M522 321h1M76 322h1M522 322h1M76 323h1M522 323h1M76 324h1M522 324h1M76 325h1M522 325h1M77 326h1M521 326h1M77 327h1M521 327h1M77 328h1M521 328h1M77 329h1M521 329h1M77 330h1M521 330h1M77 331h1M521 331h1M77 332h1M521 332h1M77 333h1M521 333h1M78 334h1M520 334h1M78 335h1M520 335h1M78 336h1M520 336h1M78 337h1M520 337h1M78 338h1M520 338h1M79 339h1M519 339h1M79 340h1M519 340h1M79 341h1M519 341h1M79 342h1M519 342h1M80 343h1M518 343h1M80 344h1M518 344h1M80 345h1M518 345h1M80 346h1M518 346h1M81 347h1M517 347h1M81 348h1M517 348h1M81 349h1M517 349h1M81 350h1M517 350h1M82 351h1M516 351h1M82 352h1M516 352h1M82 353h1M516 353h1M82 354h1M516 354h1M83 355h1M515 355h1M83 356h1M515 356h1M83 357h1M515 357h1M83 358h1M515 358h1M84 359h1M514 359h1M84 360h1M514 360h1M84 361h1M514 361h1M85 362h1M513 362h1M85 363h1M513 363h1M85 364h1M513 364h1M85 365h1M513 365h1M86 366h1M512 366h1M86 367h1M512 367h1M86 368h1M512 368h1M86 369h1M512 369h1M87 370h1M511 370h1M87 371h1M511 371h1M88 372h1M510 372h1M88 373h1M510 373h1M89 374h1M509 374h1M89 375h1M509 375h1M89 376h1M509 376h1M90 377h1M508 377h1M90 378h1M508 378h1M90 379h1M508 379h1M90 380h1M508 380h1M91 381h1M507 381h1M91 382h1M507 382h1M91 383h1M507 383h1M91 384h1M507 384h1M92 385h1M506 385h1M92 386h1M506 386h1M93 387h1M505 387h1M93 388h1M505 388h1M94 389h1M504 389h1M94 390h1M504 390h1M95 391h1M503 391h1M95 392h1M503 392h1M96 393h1M502 393h1M96 394h1M502 394h1M97 395h1M501 395h1M97 396h1M501 396h1M98 397h1M500 397h1M98 398h1M500 398h1M99 399h1M499 399h1M99 400h1M499 400h1M100 401h1M498 401h1M100 402h1M498 402h1M101 403h1M497 403h1M101 404h1M497 404h1M102 405h1M496 405h1M102 406h1M496 406h1M103 407h1M495 407h1M103 408h1M495 408h1M104 409h1M494 409h1M104 410h1M494 410h1M105 411h1M493 411h1M106 412h1M492 412h1M106 413h1M492 413h1M107 414h1M491 414h1M108 415h1M490 415h1M108 416h1M490 416h1M109 417h1M489 417h1M110 418h1M488 418h1M110 419h1M488 419h1M111 420h1M487 420h1M111 421h1M487 421h1M112 422h1M486 422h1M112 423h1M486 423h1M113 424h1M485 424h1M114 425h1M484 425h1M115 426h1M483 426h1M116 427h1M482 427h1M116 428h1M482 428h1M117 429h1M481 429h1M118 430h1M480 430h1M119 431h1M479 431h1M119 432h1M479 432h1M120 433h1M478 433h1M121 434h1M477 434h1M122 435h1M476 435h1M122 436h1M476 436h1M123 437h1M475 437h1M124 438h1M474 438h1M125 439h1M473 439h1M126 440h1M472 440h1M126 441h1M472 441h1M127 442h1M471 442h1M128 443h1M470 443h1M129 444h1M469 444h1M130 445h1M468 445h1M131 446h1M467 446h1M131 447h1M467 447h1M132 448h1M466 448h1M133 449h1M465 449h1M134 450h1M464 450h1M135 451h1M463 451h1M136 452h1M462 452h1M137 453h1M461 453h1M138 454h1M460 454h1M139 455h1M459 455h1M140 456h1M458 456h1M141 457h1M457 457h1M142 458h1M456 458h1M143 459h1M455 459h1M144 460h1M454 460h1M145 461h1M453 461h1M146 462h1M452 462h1M147 463h1M451 463h1M148 464h1M450 464h1M149 465h1M449 465h1M150 466h1M448 466h1M151 467h1M446 467h2M152 468h2M445 468h1M154 469h1M444 469h1M155 470h1M443 470h1M156 471h1M442 471h1M157 472h1M440 472h2M158 473h2M439 473h1M160 474h1M438 474h1M161 475h1M437 475h1M162 476h2M435 476h2M164 477h1M434 477h1M165 478h1M433 478h1M166 479h2M431 479h2M168 480h1M430 480h1M169 481h1M429 481h1M170 482h1M427 482h2M171 483h2M426 483h1M173 484h1M425 484h1M174 485h1M424 485h1M175 486h2M422 486h2M177 487h2M420 487h2M179 488h2M418 488h2M181 489h1M417 489h1M182 490h2M415 490h2M184 491h1M414 491h1M185 492h2M412 492h2M187 493h1M411 493h1M188 494h2M409 494h2M190 495h2M407 495h2M192 496h2M405 496h2M194 497h2M403 497h2M196 498h2M401 498h2M198 499h2M399 499h2M200 500h2M397 500h2M202 501h2M395 501h2M204 502h2M393 502h2M206 503h2M391 503h2M208 504h2M389 504h2M210 505h2M387 505h2M212 506h2M385 506h2M214 507h3M381 507h4M217 508h4M377 508h4M221 509h4M374 509h3M225 510h2M372 510h2M227 511h2M370 511h2M229 512h3M366 512h4M232 513h4M362 513h4M236 514h4M359 514h3M240 515h4M355 515h4M244 516h3M351 516h4M247 517h4M347 517h4M251 518h4M343 518h4M255 519h4M339 519h4M259 520h6M334 520h5M265 521h7M326 521h8M272 522h16M310 522h16M288 523h22"/>
<path stroke="#fff" d="M283 105h33M276 106h7M316 106h7M269 107h7M323 107h6M263 108h6M329 108h7M258 109h5M336 109h5M254 110h4M341 110h4M251 111h3M345 111h3M248 112h3M348 112h3M245 113h3M351 113h3M241 114h4M354 114h4M238 115h3M358 115h3M235 116h3M361 116h3M232 117h3M364 117h3M229 118h3M367 118h3M226 119h3M370 119h3M224 120h2M373 120h2M222 121h2M375 121h2M219 122h3M377 122h2M217 123h2M379 123h2M215 124h2M381 124h2M213 125h2M383 125h2M211 126h2M385 126h2M209 127h2M387 127h2M207 128h2M389 128h2M205 129h2M391 129h2M203 130h2M393 130h2M202 131h1M395 131h2M200 132h2M397 132h2M199 133h1M399 133h1M197 134h2M400 134h2M196 135h1M402 135h1M194 136h2M403 136h2M192 137h2M405 137h2M191 138h1M407 138h1M189 139h2M408 139h2M188 140h1M410 140h1M186 141h2M411 141h2M185 142h1M413 142h1M184 143h1M414 143h1M182 144h2M415 144h2M181 145h1M417 145h1M180 146h1M418 146h1M179 147h1M419 147h1M177 148h2M420 148h1M176 149h1M421 149h2M175 150h1M423 150h1M174 151h1M424 151h1M173 152h1M425 152h1M171 153h2M426 153h2M170 154h1M428 154h1M169 155h1M429 155h1M168 156h1M430 156h1M167 157h1M431 157h1M166 158h1M432 158h1M165 159h1M433 159h1M164 160h1M434 160h1M163 161h1M435 161h1M162 162h1M436 162h1M161 163h1M437 163h1M160 164h1M438 164h1M159 165h1M439 165h1M158 166h1M440 166h1M157 167h1M441 167h1M156 168h1M442 168h1M155 169h1M443 169h1M154 170h1M444 170h1M153 171h1M445 171h1M153 172h1M445 172h1M152 173h1M446 173h1M151 174h1M447 174h1M150 175h1M448 175h1M149 176h1M449 176h1M148 177h1M450 177h1M148 178h1M450 178h1M147 179h1M451 179h1M146 180h1M452 180h1M145 181h1M453 181h1M144 182h1M454 182h1M144 183h1M454 183h1M143 184h1M455 184h1M142 185h1M456 185h1M141 186h1M457 186h1M141 187h1M457 187h1M140 188h1M458 188h1M139 189h1M459 189h1M139 190h1M459 190h1M138 191h1M460 191h1M137 192h1M461 192h1M137 193h1M461 193h1M136 194h1M462 194h1M136 195h1M462 195h1M135 196h1M463 196h1M134 197h1M464 197h1M134 198h1M464 198h1M133 199h1M465 199h1M132 200h1M466 200h1M132 201h1M466 201h1M131 202h1M467 202h1M130 203h1M468 203h1M130 204h1M468 204h1M129 205h1M469 205h1M129 206h1M469 206h1M128 207h1M470 207h1M128 208h1M470 208h1M127 209h1M471 209h1M127 210h1M471 210h1M126 211h1M472 211h1M126 212h1M472 212h1M125 213h1M473 213h1M125 214h1M473 214h1M124 215h1M474 215h1M124 216h1M474 216h1M123 217h1M475 217h1M123 218h1M475 218h1M122 219h1M476 219h1M122 220h1M476 220h1M122 221h1M476 221h1M121 222h1M477 222h1M121 223h1M477 223h1M120 224h1M478 224h1M120 225h1M478 225h1M119 226h1M479 226h1M119 227h1M479 227h1M119 228h1M479 228h1M118 229h1M480 229h1M118 230h1M480 230h1M118 231h1M480 231h1M117 232h1M481 232h1M117 233h1M481 233h1M117 234h1M481 234h1M116 235h1M482 235h1M116 236h1M482 236h1M116 237h1M482 237h1M115 238h1M483 238h1M115 239h1M483 239h1M115 240h1M483 240h1M114 241h1M484 241h1M114 242h1M484 242h1M114 243h1M484 243h1M114 244h1M484 244h1M113 245h1M485 245h1M113 246h1M485 246h1M113 247h1M485 247h1M112 248h1M486 248h1M112 249h1M486 249h1M112 250h1M486 250h1M111 251h1M487 251h1M111 252h1M487 252h1M111 253h1M487 253h1M110 254h1M488 254h1M110 255h1M488 255h1M110 256h1M488 256h1M110 257h1M488 257h1M109 258h1M489 258h1M109 259h1M489 259h1M109 260h1M489 260h1M109 261h1M489 261h1M109 262h1M489 262h1M108 263h1M490 263h1M108 264h1M490 264h1M108 265h1M490 265h1M108 266h1M490 266h1M108 267h1M490 267h1M108 268h1M490 268h1M107 269h1M491 269h1M107 270h1M491 270h1M107 271h1M491 271h1M107 272h1M491 272h1M107 273h1M491 273h1M107 274h1M491 274h1M107 275h1M491 275h1M106 276h1M492 276h1M106 277h1M492 277h1M106 278h1M492 278h1M106 279h1M492 279h1M106 280h1M492 280h1M106 281h1M492 281h1M106 282h1M492 282h1M105 283h1M493 283h1M105 284h1M493 284h1M105 285h1M493 285h1M105 286h1M493 286h1M105 287h1M493 287h1M105 288h1M493 288h1M105 289h1M493 289h1M105 290h1M493 290h1M105 291h1M493 291h1M105 292h1M493 292h1M105 293h1M493 293h1M105 294h1M493 294h1M105 295h1M493 295h1M105 296h1M493 296h1M105 297h1M493 297h1M105 298h1M493 298h1M105 299h1M493 299h1M105 300h1M493 300h1M105 301h1M493 301h1M105 302h1M493 302h1M105 303h1M493 303h1M105 304h1M493 304h1M105 305h1M493 305h1M105 306h1M493 306h1M105 307h1M493 307h1M105 308h1M493 308h1M105 309h1M493 309h1M105 310h1M493 310h1M105 311h1M493 311h1M105 312h1M493 312h1M105 313h1M493 313h1M105 314h1M493 314h1M105 315h1M493 315h1M106 316h1M492 316h1M106 317h1M492 317h1M106 318h1M492 318h1M106 319h1M492 319h1M106 320h1M492 320h1M106 321h1M492 321h1M106 322h1M492 322h1M107 323h1M491 323h1M107 324h1M491 324h1M107 325h1M491 325h1M107 326h1M491 326h1M107 327h1M491 327h1M107 328h1M491 328h1M108 329h1M490 329h1M108 330h1M490 330h1M108 331h1M490 331h1M108 332h1M490 332h1M108 333h1M490 333h1M108 334h1M490 334h1M108 335h1M490 335h1M109 336h1M489 336h1M109 337h1M489 337h1M109 338h1M489 338h1M109 339h1M489 339h1M109 340h1M489 340h1M110 341h1M488 341h1M110 342h1M488 342h1M110 343h1M488 343h1M110 344h1M488 344h1M111 345h1M487 345h1M111 346h1M487 346h1M111 347h1M487 347h1M112 348h1M486 348h1M112 349h1M486 349h1M112 350h1M486 350h1M113 351h1M485 351h1M113 352h1M485 352h1M113 353h1M485 353h1M114 354h1M484 354h1M114 355h1M484 355h1M114 356h1M484 356h1M114 357h1M484 357h1M115 358h1M483 358h1M115 359h1M483 359h1M115 360h1M483 360h1M116 361h1M482 361h1M116 362h1M482 362h1M116 363h1M482 363h1M117 364h1M481 364h1M117 365h1M481 365h1M117 366h1M481 366h1M118 367h1M480 367h1M118 368h1M480 368h1M118 369h1M480 369h1M119 370h1M479 370h1M119 371h1M479 371h1M119 372h1M479 372h1M120 373h1M478 373h1M120 374h1M478 374h1M121 375h1M477 375h1M121 376h1M477 376h1M122 377h1M476 377h1M122 378h1M476 378h1M123 379h1M475 379h1M123 380h1M475 380h1M124 381h1M474 381h1M124 382h1M474 382h1M125 383h1M473 383h1M125 384h1M473 384h1M126 385h1M472 385h1M126 386h1M472 386h1M127 387h1M471 387h1M127 388h1M471 388h1M128 389h1M470 389h1M128 390h1M470 390h1M129 391h1M469 391h1M129 392h1M469 392h1M130 393h1M468 393h1M130 394h1M468 394h1M131 395h1M467 395h1M131 396h1M467 396h1M132 397h1M466 397h1M132 398h1M466 398h1M133 399h1M465 399h1M134 400h1M464 400h1M134 401h1M464 401h1M135 402h1M463 402h1M136 403h1M462 403h1M136 404h1M462 404h1M137 405h1M461 405h1M137 406h1M461 406h1M138 407h1M460 407h1M139 408h1M459 408h1M139 409h1M459 409h1M140 410h1M458 410h1M141 411h1M457 411h1M141 412h1M457 412h1M142 413h1M456 413h1M143 414h1M455 414h1M144 415h1M454 415h1M144 416h1M454 416h1M145 417h1M453 417h1M146 418h1M452 418h1M147 419h1M451 419h1M148 420h1M450 420h1M149 421h1M449 421h1M149 422h1M449 422h1M150 423h1M448 423h1M151 424h1M447 424h1M152 425h1M446 425h1M153 426h1M445 426h1M153 427h1M445 427h1M154 428h1M444 428h1M155 429h1M443 429h1M156 430h1M442 430h1M157 431h1M441 431h1M158 432h1M440 432h1M159 433h1M439 433h1M160 434h1M438 434h1M161 435h1M437 435h1M162 436h1M436 436h1M163 437h1M435 437h1M164 438h1M434 438h1M165 439h1M433 439h1M166 440h1M432 440h1M167 441h1M431 441h1M168 442h1M430 442h1M169 443h1M429 443h1M170 444h1M428 444h1M171 445h2M426 445h2M173 446h1M425 446h1M174 447h1M424 447h1M175 448h1M423 448h1M176 449h1M421 449h2M177 450h2M420 450h1M179 451h1M419 451h1M180 452h1M418 452h1M181 453h1M417 453h1M182 454h2M415 454h2M184 455h1M414 455h1M185 456h1M413 456h1M186 457h2M411 457h2M188 458h1M410 458h1M189 459h2M408 459h2M191 460h1M407 460h1M192 461h2M405 461h2M194 462h2M403 462h2M196 463h1M402 463h1M197 464h2M400 464h2M199 465h1M399 465h1M200 466h2M397 466h2M202 467h1M395 467h2M203 468h2M393 468h2M205 469h2M391 469h2M207 470h2M389 470h2M209 471h2M387 471h2M211 472h2M385 472h2M213 473h2M383 473h2M215 474h2M381 474h2M217 475h2M379 475h2M219 476h3M377 476h2M222 477h2M375 477h2M224 478h2M373 478h2M226 479h3M370 479h3M229 480h3M367 480h3M232 481h3M364 481h3M235 482h3M361 482h3M238 483h3M358 483h3M241 484h4M354 484h4M245 485h3M351 485h3M248 486h3M348 486h3M251 487h3M345 487h3M254 488h4M341 488h4M258 489h5M336 489h5M263 490h6M329 490h7M269 491h7M323 491h6M276 492h7M316 492h7M283 493h33"/>
<path stroke="#fff" d="M130 469h1M129 470h1M128 471h1M127 472h1M126 473h1M125 474h1M124 475h1M123 476h1M122 477h1M121 478h1M120 479h1M119 480h1M118 481h1M117 482h1M116 483h1M115 484h1M115 485h1M114 486h1M113 487h1M112 488h1M111 489h1M110 490h1M109 491h1M108 492h1M107 493h1M106 494h1M105 495h1M104 496h1M103 497h1M102 498h1M101 499h1M100 500h1"/>
<path stroke="#fff" d="M75 299h30"/>
<path stroke="#f00" d="M163 519h3M173 519h3M162 520h1M166 520h1M172 520h1M176 520h1M161 521h1M167 521h1M171 521h1M177 521h1M161 522h1M167 522h1M171 522h1M177 522h1M161 523h1M167 523h1M171 523h1M177 523h1M162 524h1M168 524h1M170 524h1M176 524h1M163 525h1M168 525h1M170 525h1M175 525h1M168 526h1M170 526h1M168 527h1M170 527h1M169 528h1M169 529h1M169 530h1M169 531h1M169 532h1M169 533h1M169 534h1M169 535h1"/>
<path stroke="#fff" d="M238 531h1M238 532h1M237 533h1M237 534h1M237 535h1M237 536h1M236 537h1M236 538h1M236 539h1M236 540h1M235 541h1M235 542h1M235 543h1M235 544h1M234 545h1M234 546h1M234 547h1M234 548h1M233 549h1M233 550h1M233 551h1M232 552h1M232 553h1M232 554h1M232 555h1M231 556h1M231 557h1M231 558h1M231 559h1M230 560h1M230 561h1M230 562h1M230 563h1M229 564h1M229 565h1M229 566h1M229 567h1M228 568h1M228 569h1M228 570h1M228 571h1M227 572h1M227 573h1"/>
<path stroke="#fff" d="M151 425h1M150 426h1M149 427h1M147 428h2M146 429h1M145 430h1M144 431h1M143 432h1M142 433h1M140 434h2M139 435h1M138 436h1M137 437h1M136 438h1M135 439h1M134 440h1M132 441h2M131 442h1M130 443h1M129 444h1"/>
<path stroke="#808080" d="M299 299h1M297 301h1M295 302h1M293 304h1M291 306h1M289 308h1M287 309h1M285 311h1M283 313h1M281 314h1M279 316h1M277 318h1M275 319h1M273 321h1M271 323h1M269 325h1M267 326h1M265 328h1M263 330h1M261 331h1M259 333h1M257 335h1M255 336h1M253 338h1M251 340h1M249 342h1M247 343h1M245 345h1M243 347h1M241 348h1M239 350h1M237 352h1M235 353h1M233 355h1M231 357h1M229 359h1M227 360h1M225 362h1M223 364h1M221 365h1M219 367h1M217 369h1M215 370h1M213 372h1M211 374h1M209 376h1M207 377h1M205 379h1M203 381h1M201 382h1M199 384h1M197 386h1M195 387h1M193 389h1M191 391h1M189 393h1M187 394h1M185 396h1M183 398h1M181 399h1M179 401h1M177 403h1M175 404h1M173 406h1M171 408h1M169 410h1M167 411h1M165 413h1M163 415h1M161 416h1M159 418h1M157 420h1M155 421h1M153 423h1"/>
<path stroke="#ff0" d="M294 553h1M306 553h1M295 554h1M305 554h1M295 555h1M305 555h1M296 556h2M303 556h2M298 557h5M296 558h2M303 558h2M295 559h1M305 559h1M295 560h1M305 560h1M294 561h1M306 561h1M294 562h1M306 562h1M294 563h1M306 563h1M294 564h1M306 564h1M294 565h1M306 565h1M295 566h1M305 566h1M295 567h1M305 567h1M296 568h2M303 568h2M298 569h5"/>
<path stroke="#fff" d="M362 530h1M362 531h1M363 532h1M363 533h1M363 534h1M363 535h1M364 536h1M364 537h1M364 538h1M364 539h1M365 540h1M365 541h1M365 542h1M365 543h1M366 544h1M366 545h1M366 546h1M366 547h1M367 548h1M367 549h1M367 550h1M368 551h1M368 552h1M368 553h1M368 554h1M369 555h1M369 556h1M369 557h1M369 558h1M370 559h1M370 560h1M370 561h1M370 562h1M371 563h1M371 564h1M371 565h1M371 566h1M372 567h1M372 568h1M372 569h1M372 570h1M373 571h1M373 572h1"/>
<path stroke="#fff" d="M251 488h1M251 489h1M250 490h1M250 491h1M250 492h1M250 493h1M249 494h1M249 495h1M249 496h1M249 497h1M248 498h1M248 499h1M248 500h1M248 501h1M247 502h1M247 503h1M247 504h1M247 505h1M246 506h1M246 507h1M246 508h1M246 509h1M245 510h1M245 511h1M245 512h1M245 513h1M244 514h1M244 515h1M244 516h1"/>
<path stroke="#808080" d="M299 299h1M298 301h1M298 303h1M297 305h1M297 307h1M296 309h1M296 311h1M295 313h1M295 315h1M294 317h1M294 319h1M293 321h1M293 323h1M292 325h1M292 327h1M291 329h1M291 331h1M290 333h1M290 335h1M289 337h1M289 339h1M288 341h1M288 343h1M287 345h1M287 347h1M286 349h1M286 351h1M285 353h1M285 355h1M284 357h1M284 359h1M283 361h1M283 363h1M282 365h1M282 367h1M281 369h1M281 371h1M280 373h1M280 375h1M279 377h1M279 379h1M278 381h1M278 383h1M277 385h1M277 387h1M276 389h1M276 391h1M275 393h1M274 395h1M274 397h1M273 399h1M273 401h1M272 403h1M272 405h1M271 407h1M271 409h1M270 411h1M270 413h1M269 415h1M269 417h1M268 419h1M268 421h1M267 423h1M267 425h1M266 427h1M266 429h1M265 431h1M265 433h1M264 435h1M264 437h1M263 439h1M263 441h1M262 443h1M262 445h1M261 447h1M261 449h1M260 451h1M260 453h1M259 455h1M259 457h1M258 459h1M258 461h1M257 463h1M257 465h1M256 467h1M256 469h1M255 471h1M255 473h1M254 475h1M254 477h1M253 479h1M253 481h1M252 483h1M252 485h1M251 487h1"/>
<path stroke="#0f0" d="M425 518h1M439 518h1M426 519h1M438 519h1M427 520h11M429 521h1M435 521h1M429 522h1M435 522h1M429 523h1M435 523h1M429 524h1M435 524h1M429 525h1M435 525h1M429 526h1M435 526h1M429 527h1M435 527h1M429 528h1M435 528h1M429 529h1M435 529h1M429 530h1M435 530h1M429 531h1M435 531h1M427 532h11M426 533h1M438 533h1M425 534h1M439 534h1"/>
<path stroke="#fff" d="M469 468h1M470 469h1M471 470h1M472 471h1M473 472h1M474 473h1M475 474h1M476 475h1M477 476h1M478 477h1M479 478h1M480 479h1M481 480h1M482 481h1M483 482h1M484 483h2M486 484h1M487 485h1M488 486h1M489 487h1M490 488h1M491 489h1M492 490h1M493 491h1M494 492h1M495 493h1M496 494h1M497 495h1M498 496h1M499 497h1M500 498h1"/>
<path stroke="#fff" d="M345 488h1M345 489h1M346 490h1M346 491h1M346 492h1M346 493h1M347 494h1M347 495h1M347 496h1M347 497h1M348 498h1M348 499h1M348 500h1M348 501h1M349 502h1M349 503h1M349 504h1M349 505h1M350 506h1M350 507h1M350 508h1M350 509h1M351 510h1M351 511h1M351 512h1M351 513h1M352 514h1M352 515h1M352 516h1"/>
<path stroke="#00f" d="M525 422h5M522 423h3M530 423h1M521 424h1M531 424h3M520 425h1M530 425h1M534 425h1M519 426h1M529 426h1M535 426h1M529 427h1M535 427h1M521 428h3M529 428h1M535 428h1M520 429h1M524 429h1M530 429h1M534 429h1M519 430h1M525 430h1M531 430h3M519 431h1M525 431h1M519 432h1M525 432h1M535 432h1M520 433h1M524 433h1M534 433h1M521 434h3M533 434h1M524 435h1M530 435h3M525 436h5"/>
<path stroke="#fff" d="M531 360h2M533 361h4M537 362h4M541 363h4M545 364h4M549 365h3M552 366h4M556 367h4M560 368h4M564 369h4M568 370h4M572 371h2"/>
<path stroke="#fff" d="M418 453h1M419 454h1M420 455h1M420 456h1M421 457h1M422 458h1M423 459h1M423 460h1M424 461h1M425 462h1M426 463h1M427 464h1M427 465h1M428 466h1M429 467h1M430 468h1M431 469h1M431 470h1M432 471h1M433 472h1M434 473h1M434 474h1M435 475h1M436 476h1"/>
<path stroke="#808080" d="M299 299h1M301 301h1M302 303h1M304 305h1M305 307h1M307 309h1M308 311h1M310 313h1M311 315h1M313 317h1M314 319h1M316 321h1M318 323h1M319 325h1M321 327h1M322 329h1M324 331h1M325 333h1M327 335h1M328 337h1M330 339h1M331 341h1M333 343h1M334 345h1M336 347h1M338 349h1M339 351h1M341 353h1M342 355h1M344 357h1M345 359h1M347 361h1M348 363h1M350 365h1M351 367h1M353 369h1M355 371h1M356 373h1M358 375h1M359 377h1M361 379h1M362 381h1M364 383h1M365 385h1M367 387h1M368 389h1M370 391h1M371 393h1M373 395h1M375 397h1M376 399h1M378 401h1M379 403h1M381 405h1M382 407h1M384 409h1M385 411h1M387 413h1M388 415h1M390 417h1M392 419h1M393 421h1M395 423h1M396 425h1M398 427h1M399 429h1M401 431h1M402 433h1M404 435h1M405 437h1M407 439h1M409 441h1M410 443h1M412 445h1M413 447h1M415 449h1M416 451h1"/>
<path stroke="#f00" d="M559 290h5M558 291h1M564 291h1M557 292h1M565 292h1M556 293h1M566 293h1M555 294h1M567 294h1M555 295h1M567 295h1M555 296h1M567 296h1M555 297h1M567 297h1M555 298h1M567 298h1M556 299h1M566 299h1M557 300h1M565 300h1M557 301h1M565 301h1M553 302h1M557 302h1M565 302h1M554 303h1M556 303h1M566 303h1M555 304h1M567 304h1M568 305h1M569 306h1"/>
<path stroke="#fff" d="M571 225h2M567 226h4M563 227h4M559 228h4M555 229h4M551 230h4M548 231h3M544 232h4M540 233h4M536 234h4M532 235h4M530 236h2"/>
<path stroke="#fff" d="M470 391h1M471 392h2M473 393h2M475 394h2M477 395h2M479 396h2M481 397h2M483 398h1M484 399h2M486 400h2M488 401h2M490 402h2M492 403h2M494 404h2M496 405h1"/>
<path stroke="#808080" d="M299 299h1M301 300h1M303 301h1M305 302h1M307 303h1M309 304h1M311 305h1M313 307h1M315 308h1M317 309h1M319 310h1M321 311h1M323 312h1M325 313h1M327 314h1M329 315h1M331 316h1M333 317h1M335 318h1M337 320h1M339 321h1M341 322h1M343 323h1M345 324h1M347 325h1M349 326h1M351 327h1M353 328h1M355 329h1M357 330h1M359 331h1M361 333h1M363 334h1M365 335h1M367 336h1M369 337h1M371 338h1M373 339h1M375 340h1M377 341h1M379 342h1M381 343h1M383 344h1M385 346h1M387 347h1M389 348h1M391 349h1M393 350h1M395 351h1M397 352h1M399 353h1M401 354h1M403 355h1M405 356h1M407 357h1M409 359h1M411 360h1M413 361h1M415 362h1M417 363h1M419 364h1M421 365h1M423 366h1M425 367h1M427 368h1M429 369h1M431 370h1M433 372h1M435 373h1M437 374h1M439 375h1M441 376h1M443 377h1M445 378h1M447 379h1M449 380h1M451 381h1M453 382h1M455 383h1M457 385h1M459 386h1M461 387h1M463 388h1M465 389h1M467 390h1M469 391h1"/>
<path stroke="#ff0" d="M518 159h1M522 159h1M526 159h1M519 160h1M521 160h1M523 160h1M525 160h1M527 160h1M520 161h1M524 161h1M528 161h1M532 161h1M520 162h1M524 162h1M528 162h1M531 162h2M520 163h1M524 163h1M528 163h1M530 163h1M532 163h1M520 164h1M524 164h1M528 164h2M532 164h1M520 165h1M524 165h1M528 165h1M532 165h1M520 166h1M524 166h1M528 166h1M532 166h1M520 167h1M524 167h1M528 167h1M532 167h1M520 168h1M524 168h1M528 168h1M532 168h1M520 169h1M524 169h1M528 169h1M532 169h1M520 170h1M524 170h1M528 170h1M532 170h1M520 171h1M524 171h1M528 171h1M532 171h1M520 172h1M524 172h1M529 172h1M531 172h1M520 173h1M524 173h1M530 173h1M529 174h1M531 174h1M528 175h1M532 175h1"/>
<path stroke="#fff" d="M498 98h1M497 99h1M496 100h1M495 101h1M494 102h1M493 103h1M492 104h1M491 105h1M490 106h1M489 107h1M488 108h1M487 109h1M486 110h1M485 111h1M484 112h1M483 113h1M483 114h1M482 115h1M481 116h1M480 117h1M479 118h1M478 119h1M477 120h1M476 121h1M475 122h1M474 123h1M473 124h1M472 125h1M471 126h1M470 127h1M469 128h1M468 129h1"/>
<path stroke="#fff" d="M494 299h30"/>
<path stroke="#0f0" d="M427 67h5M426 68h1M432 68h1M425 69h1M433 69h1M425 70h1M433 70h1M425 71h1M433 71h1M426 72h1M432 72h1M421 73h7M431 73h7M421 77h17"/>
<path stroke="#fff" d="M371 25h1M371 26h1M370 27h1M370 28h1M370 29h1M370 30h1M369 31h1M369 32h1M369 33h1M369 34h1M368 35h1M368 36h1M368 37h1M368 38h1M367 39h1M367 40h1M367 41h1M367 42h1M366 43h1M366 44h1M366 45h1M365 46h1M365 47h1M365 48h1M365 49h1M364 50h1M364 51h1M364 52h1M364 53h1M363 54h1M363 55h1M363 56h1M363 57h1M362 58h1M362 59h1M362 60h1M362 61h1M361 62h1M361 63h1M361 64h1M361 65h1M360 66h1M360 67h1"/>
<path stroke="#fff" d="M469 154h1M468 155h1M467 156h1M465 157h2M464 158h1M463 159h1M462 160h1M461 161h1M460 162h1M458 163h2M457 164h1M456 165h1M455 166h1M454 167h1M453 168h1M452 169h1M450 170h2M449 171h1M448 172h1M447 173h1"/>
<path stroke="#808080" d="M445 175h1M443 177h1M441 178h1M439 180h1M437 182h1M435 183h1M433 185h1M431 187h1M429 188h1M427 190h1M425 192h1M423 194h1M421 195h1M419 197h1M417 199h1M415 200h1M413 202h1M411 204h1M409 205h1M407 207h1M405 209h1M403 211h1M401 212h1M399 214h1M397 216h1M395 217h1M393 219h1M391 221h1M389 222h1M387 224h1M385 226h1M383 228h1M381 229h1M379 231h1M377 233h1M375 234h1M373 236h1M371 238h1M369 239h1M367 241h1M365 243h1M363 245h1M361 246h1M359 248h1M357 250h1M355 251h1M353 253h1M351 255h1M349 256h1M347 258h1M345 260h1M343 262h1M341 263h1M339 265h1M337 267h1M335 268h1M333 270h1M331 272h1M329 273h1M327 275h1M325 277h1M323 279h1M321 280h1M319 282h1M317 284h1M315 285h1M313 287h1M311 289h1M309 290h1M307 292h1M305 294h1M303 296h1M301 297h1M299 299h1"/>
<path stroke="#00f" d="M290 29h1M294 29h1M298 29h1M291 30h1M293 30h1M295 30h1M297 30h1M299 30h1M292 31h1M296 31h1M300 31h1M292 32h1M296 32h1M300 32h1M292 33h1M296 33h1M300 33h1M292 34h1M296 34h1M300 34h1M292 35h1M296 35h1M300 35h1M292 36h1M296 36h1M300 36h1M292 37h1M296 37h1M300 37h1M292 38h1M296 38h1M300 38h1M292 39h1M296 39h1M300 39h1M292 40h1M296 40h1M300 40h1M305 40h1M292 41h1M296 41h1M300 41h1M304 41h3M292 42h1M296 42h1M300 42h1M305 42h1M292 43h1M296 43h1M300 43h1M305 43h1M301 44h1M304 44h1M302 45h2"/>
<path stroke="#fff" d="M225 26h1M225 27h1M226 28h1M226 29h1M226 30h1M226 31h1M227 32h1M227 33h1M227 34h1M227 35h1M228 36h1M228 37h1M228 38h1M228 39h1M229 40h1M229 41h1M229 42h1M229 43h1M230 44h1M230 45h1M230 46h1M231 47h1M231 48h1M231 49h1M231 50h1M232 51h1M232 52h1M232 53h1M232 54h1M233 55h1M233 56h1M233 57h1M233 58h1M234 59h1M234 60h1M234 61h1M234 62h1M235 63h1M235 64h1M235 65h1M235 66h1M236 67h1M236 68h1"/>
<path stroke="#fff" d="M354 82h1M354 83h1M353 84h1M353 85h1M353 86h1M353 87h1M352 88h1M352 89h1M352 90h1M352 91h1M351 92h1M351 93h1M351 94h1M351 95h1M350 96h1M350 97h1M350 98h1M350 99h1M349 100h1M349 101h1M349 102h1M349 103h1M348 104h1M348 105h1M348 106h1M348 107h1M347 108h1M347 109h1M347 110h1"/>
<path stroke="#808080" d="M347 111h1M346 113h1M346 115h1M345 117h1M345 119h1M344 121h1M344 123h1M343 125h1M343 127h1M342 129h1M342 131h1M341 133h1M341 135h1M340 137h1M340 139h1M339 141h1M339 143h1M338 145h1M338 147h1M337 149h1M337 151h1M336 153h1M336 155h1M335 157h1M335 159h1M334 161h1M334 163h1M333 165h1M333 167h1M332 169h1M332 171h1M331 173h1M331 175h1M330 177h1M330 179h1M329 181h1M329 183h1M328 185h1M328 187h1M327 189h1M327 191h1M326 193h1M326 195h1M325 197h1M325 199h1M324 201h1M324 203h1M323 205h1M322 207h1M322 209h1M321 211h1M321 213h1M320 215h1M320 217h1M319 219h1M319 221h1M318 223h1M318 225h1M317 227h1M317 229h1M316 231h1M316 233h1M315 235h1M315 237h1M314 239h1M314 241h1M313 243h1M313 245h1M312 247h1M312 249h1M311 251h1M311 253h1M310 255h1M310 257h1M309 259h1M309 261h1M308 263h1M308 265h1M307 267h1M307 269h1M306 271h1M306 273h1M305 275h1M305 277h1M304 279h1M304 281h1M303 283h1M303 285h1M302 287h1M302 289h1M301 291h1M301 293h1M300 295h1M300 297h1M299 299h1"/>
<path stroke="#f00" d="M171 64h5M174 65h2M173 66h1M175 66h1M172 67h1M175 67h1M171 68h1M175 68h1M170 69h1M161 70h1M169 70h1M162 71h1M168 71h1M163 72h1M167 72h1M164 73h1M166 73h1M165 74h1M164 75h1M166 75h1M163 76h1M167 76h1M162 77h1M168 77h1M161 78h1M169 78h1M160 79h1M159 80h1"/>
<path stroke="#fff" d="M98 100h1M99 101h1M100 102h1M101 103h1M102 104h1M103 105h1M104 106h1M105 107h1M106 108h1M107 109h1M108 110h1M109 111h1M110 112h1M111 113h1M112 114h1M113 115h2M115 116h1M116 117h1M117 118h1M118 119h1M119 120h1M120 121h1M121 122h1M122 123h1M123 124h1M124 125h1M125 126h1M126 127h1M127 128h1M128 129h1M129 130h1"/>
<path stroke="#fff" d="M246 82h1M246 83h1M247 84h1M247 85h1M247 86h1M247 87h1M248 88h1M248 89h1M248 90h1M248 91h1M249 92h1M249 93h1M249 94h1M249 95h1M250 96h1M250 97h1M250 98h1M250 99h1M251 100h1M251 101h1M251 102h1M251 103h1M252 104h1M252 105h1M252 106h1M252 107h1M253 108h1M253 109h1M253 110h1"/>
<path stroke="#ff0" d="M65 161h1M71 161h1M75 161h3M64 162h2M71 162h2M74 162h1M78 162h1M63 163h1M65 163h1M71 163h1M73 163h1M79 163h1M65 164h1M70 164h1M72 164h1M79 164h1M65 165h1M69 165h1M73 165h1M79 165h1M65 166h1M69 166h1M74 166h1M78 166h1M65 167h1M69 167h1M75 167h1M77 167h1M65 168h1M69 168h1M76 168h1M65 169h1M69 169h1M77 169h1M66 170h1M68 170h1M78 170h1M67 171h1M79 171h1M67 172h1M79 172h1M67 173h1M79 173h1M67 174h1M79 174h1M67 175h1M79 175h1M78 176h1M77 177h1"/>
<path stroke="#fff" d="M25 227h2M27 228h4M31 229h4M35 230h4M39 231h4M43 232h3M46 233h4M50 234h4M54 235h4M58 236h4M62 237h4M66 238h2"/>
<path stroke="#fff" d="M162 122h1M163 123h1M164 124h1M164 125h1M165 126h1M166 127h1M167 128h1M167 129h1M168 130h1M169 131h1M170 132h1M171 133h1M171 134h1M172 135h1M173 136h1M174 137h1M175 138h1M175 139h1M176 140h1M177 141h1M178 142h1M178 143h1M179 144h1M180 145h1"/>
<path stroke="#808080" d="M182 147h1M183 149h1M185 151h1M186 153h1M188 155h1M189 157h1M191 159h1M193 161h1M194 163h1M196 165h1M197 167h1M199 169h1M200 171h1M202 173h1M203 175h1M205 177h1M206 179h1M208 181h1M210 183h1M211 185h1M213 187h1M214 189h1M216 191h1M217 193h1M219 195h1M220 197h1M222 199h1M223 201h1M225 203h1M227 205h1M228 207h1M230 209h1M231 211h1M233 213h1M234 215h1M236 217h1M237 219h1M239 221h1M240 223h1M242 225h1M243 227h1M245 229h1M247 231h1M248 233h1M250 235h1M251 237h1M253 239h1M254 241h1M256 243h1M257 245h1M259 247h1M260 249h1M262 251h1M264 253h1M265 255h1M267 257h1M268 259h1M270 261h1M271 263h1M273 265h1M274 267h1M276 269h1M277 271h1M279 273h1M280 275h1M282 277h1M284 279h1M285 281h1M287 283h1M288 285h1M290 287h1M291 289h1M293 291h1M294 293h1M296 295h1M297 297h1M299 299h1"/>
<path stroke="#0f0" d="M33 292h1M39 292h1M45 292h1M32 293h2M38 293h2M44 293h1M32 294h1M34 294h1M38 294h1M40 294h1M44 294h1M31 295h1M34 295h1M37 295h1M40 295h1M43 295h1M30 296h1M34 296h1M36 296h1M40 296h1M42 296h1M30 297h1M35 297h2M41 297h2M29 298h1M35 298h1M41 298h1M33 302h1M39 302h1M45 302h1M32 303h2M38 303h2M44 303h1M32 304h1M34 304h1M38 304h1M40 304h1M44 304h1M31 305h1M34 305h1M37 305h1M40 305h1M43 305h1M30 306h1M34 306h1M36 306h1M40 306h1M42 306h1M30 307h1M35 307h2M41 307h2M29 308h1M35 308h1M41 308h1"/>
<path stroke="#fff" d="M67 362h2M63 363h4M59 364h4M55 365h4M51 366h4M47 367h4M44 368h3M40 369h4M36 370h4M32 371h4M28 372h4M26 373h2"/>
<path stroke="#fff" d="M102 193h1M103 194h2M105 195h2M107 196h2M109 197h2M111 198h2M113 199h2M115 200h1M116 201h2M118 202h2M120 203h2M122 204h2M124 205h2M126 206h2M128 207h1"/>
<path stroke="#808080" d="M129 207h1M131 208h1M133 209h1M135 210h1M137 211h1M139 212h1M141 213h1M143 215h1M145 216h1M147 217h1M149 218h1M151 219h1M153 220h1M155 221h1M157 222h1M159 223h1M161 224h1M163 225h1M165 226h1M167 228h1M169 229h1M171 230h1M173 231h1M175 232h1M177 233h1M179 234h1M181 235h1M183 236h1M185 237h1M187 238h1M189 239h1M191 241h1M193 242h1M195 243h1M197 244h1M199 245h1M201 246h1M203 247h1M205 248h1M207 249h1M209 250h1M211 251h1M213 252h1M215 254h1M217 255h1M219 256h1M221 257h1M223 258h1M225 259h1M227 260h1M229 261h1M231 262h1M233 263h1M235 264h1M237 265h1M239 267h1M241 268h1M243 269h1M245 270h1M247 271h1M249 272h1M251 273h1M253 274h1M255 275h1M257 276h1M259 277h1M261 278h1M263 280h1M265 281h1M267 282h1M269 283h1M271 284h1M273 285h1M275 286h1M277 287h1M279 288h1M281 289h1M283 290h1M285 291h1M287 293h1M289 294h1M291 295h1M293 296h1M295 297h1M297 298h1M299 299h1"/>
<path stroke="#00f" d="M64 423h1M80 423h1M65 424h1M79 424h1M66 425h1M78 425h1M67 426h1M77 426h1M67 427h1M77 427h1M68 428h1M76 428h1M68 429h1M76 429h1M68 430h1M76 430h1M64 431h17M68 432h1M76 432h1M68 433h1M76 433h1M68 434h1M76 434h1M67 435h1M77 435h1M67 436h1M77 436h1M66 437h1M78 437h1M65 438h1M79 438h1M64 439h1M80 439h1"/>
<path stroke="#fff" d="M258 137h1M258 138h1M259 139h1M259 140h1M259 141h1M260 142h1M260 143h1M261 144h1M261 145h1M261 146h1M262 147h1M262 148h1"/>
<path stroke="#ff0" d="M264 154h1"/>
<path stroke="#fff" d="M137 299h7M131 300h6"/>
<path stroke="#f00" d="M149 299h1"/>
<path stroke="#808080" d="M316 454h1M316 455h1M316 456h1M316 457h1M316 458h1M316 459h1M317 460h1M317 461h1M317 462h1M317 463h1M317 464h1M317 465h1M317 466h1"/>
<path stroke="#008080" d="M316 470h5M315 471h1M321 471h1M314 472h1M322 472h1M313 473h1M323 473h1M312 474h1M324 474h1M312 475h1M324 475h1M312 476h1M324 476h1M312 477h1M324 477h1M312 478h1M324 478h1M313 479h1M323 479h1M314 480h1M322 480h1M314 481h1M322 481h1M312 482h3M322 482h3M311 483h1M314 483h1M322 483h1M325 483h1M310 484h1M314 484h1M322 484h1M326 484h1M311 485h1M313 485h1M323 485h1M325 485h1M312 486h1M324 486h1"/>
<path stroke="#008080" d="M315 448h1"/>
<path stroke="#fff" d="M207 159h1M208 160h1M208 161h1M209 162h1M209 163h1M210 164h1M211 165h1M211 166h1M212 167h1M212 168h1M213 169h1"/>
<path stroke="#00f" d="M194 141h1M199 141h3M206 141h1M194 142h1M198 142h1M202 142h1M206 142h1M194 143h1M198 143h1M202 143h1M206 143h1M194 144h1M198 144h1M202 144h1M206 144h1M194 145h1M199 145h3M206 145h1M195 146h1M205 146h1M195 147h1M205 147h1M196 148h2M203 148h2M198 149h5M200 150h1M200 151h1M200 152h1M196 153h9M200 154h1M200 155h1M200 156h1M200 157h1"/>
<path stroke="#00f" d="M217 174h1"/>
<path stroke="#fff" d="M132 283h2M134 284h2M136 285h2M138 286h3M141 287h2M143 288h2"/>
<path stroke="#00f" d="M114 274h1M120 274h1M126 274h1M114 275h1M120 275h1M126 275h1M113 276h3M118 276h5M125 276h3M114 277h1M120 277h1M126 277h1M114 278h1M120 278h1M126 278h1M115 279h1M120 279h1M125 279h1M115 280h1M120 280h1M125 280h1M116 281h2M120 281h1M123 281h2M118 282h5M120 283h1M120 284h1M120 285h1M116 286h9M120 287h1M120 288h1M120 289h1M120 290h1"/>
<path stroke="#00f" d="M150 288h1"/>
<path stroke="#808080" d="M146 337h3M142 338h4M138 339h4M136 340h2"/>
<path stroke="#0f0" d="M119 335h1M131 335h1M120 336h1M130 336h1M121 337h1M129 337h1M121 338h1M129 338h1M121 339h1M125 339h1M129 339h1M121 340h1M125 340h1M129 340h1M121 341h9M121 342h1M125 342h1M129 342h1M121 343h1M125 343h1M129 343h1M120 344h1M125 344h1M130 344h1M119 345h1M125 345h1M131 345h1M125 346h1M124 347h3M123 348h1M127 348h1M123 349h1M127 349h1M123 350h1M127 350h1M124 351h3"/>
<path stroke="#0f0" d="M154 335h1"/>
<path stroke="#808080" d="M432 380h1M433 381h2M435 382h2M437 383h1M438 384h2M440 385h2M442 386h1"/>
<path stroke="#ff0" d="M450 385h1M450 386h1M446 387h9M450 388h1M450 389h1M450 390h1M450 391h1M454 391h3M450 392h1M453 392h1M457 392h1M450 393h3M458 393h1M450 394h1M458 394h1M450 395h1M458 395h1M450 396h1M457 396h1M450 397h1M456 397h1M450 398h1M456 398h1M450 399h1M456 399h1M457 400h1M458 401h1"/>
<path stroke="#ff0" d="M427 377h1"/>
<path stroke="#fff" d="M446 221h2M444 222h2M442 223h2M440 224h2M438 225h2M437 226h1"/>
<path stroke="#f00" d="M464 207h1M463 208h1M453 209h2M462 209h1M455 210h1M462 210h1M456 211h1M462 211h1M456 212h1M462 212h1M456 213h1M462 213h1M455 214h1M462 214h1M455 215h1M462 215h1M454 216h1M462 216h1M454 217h1M462 217h1M453 218h1M462 218h1M453 219h1M462 219h1M452 220h1M462 220h1M452 221h15M462 222h1M462 223h1"/>
<path stroke="#f00" d="M431 229h1"/>
<path stroke="#fff" d="M153 356h2M150 357h3M148 358h2M145 359h3M143 360h2"/>
<path stroke="#f00" d="M135 357h6M139 358h2M138 359h1M140 359h1M137 360h1M140 360h1M136 361h1M140 361h1M135 362h1M140 362h1M127 363h5M134 363h1M126 364h1M132 364h2M125 365h1M133 365h1M124 366h1M134 366h1M124 367h1M134 367h1M124 368h1M134 368h1M124 369h1M134 369h1M124 370h1M134 370h1M125 371h1M133 371h1M126 372h1M132 372h1M127 373h5"/>
<path stroke="#f00" d="M160 354h1"/>
<path stroke="#fff" d="M275 133h1M275 134h1M275 135h1M275 136h1M275 137h1M275 138h1M274 139h1M274 140h1M274 141h1M274 142h1M274 143h1M274 144h1M274 145h1"/>
<path stroke="#0f0" d="M272 113h5M271 114h1M277 114h1M270 115h1M278 115h1M270 116h1M278 116h1M270 117h1M278 117h1M270 118h1M278 118h1M270 119h1M278 119h1M271 120h1M277 120h1M272 121h5M274 122h1M274 123h1M274 124h1M270 125h9M274 126h1M274 127h1M274 128h1M274 129h1"/>
<path stroke="#0f0" d="M275 151h1"/>
<path stroke="#fff" d="M315 132h1M315 133h1M315 134h1M316 135h1M316 136h1M316 137h1M316 138h1M316 139h1M316 140h1M317 141h1M317 142h1M317 143h1M317 144h1"/>
<path stroke="#0f0" d="M312 112h1M320 112h1M313 113h1M319 113h1M314 114h5M313 115h1M319 115h1M312 116h1M320 116h1M312 117h1M320 117h1M312 118h1M320 118h1M312 119h1M320 119h1M312 120h1M320 120h1M313 121h1M319 121h1M314 122h5M316 123h1M316 124h1M316 125h1M312 126h9M316 127h1M316 128h1"/>
<path stroke="#0f0" d="M317 150h1"/>
<path stroke="#fff" d="M187 175h1M188 176h1M189 177h1M190 178h1M191 179h1M191 180h1M192 181h1M193 182h1M194 183h1M195 184h1"/>
<path stroke="#00f" d="M175 158h5M174 159h1M180 159h2M173 160h1M182 160h1M174 161h1M183 161h1M175 162h1M184 162h1M176 163h1M184 163h1M176 164h1M185 164h1M177 165h1M185 165h1M177 166h1M185 166h1M177 167h1M185 167h1M176 168h1M185 168h1M176 169h1M184 169h1M175 170h1M184 170h1M174 171h1M183 171h1M173 172h1M182 172h1M174 173h1M180 173h2M175 174h5"/>
<path stroke="#00f" d="M199 188h1"/>
<path stroke="#fff" d="M333 135h1M332 136h1M331 137h1M330 138h1M329 139h1M328 140h1M328 141h1M327 142h1M326 143h1M325 144h1M324 145h1"/>
<path stroke="#f00" d="M333 115h5M331 116h2M338 116h2M330 117h1M340 117h1M329 118h1M341 118h1M328 119h1M342 119h1M328 120h1M342 120h1M327 121h1M343 121h1M327 122h1M343 122h1M327 123h1M335 123h1M343 123h1M327 124h1M343 124h1M327 125h1M343 125h1M328 126h1M342 126h1M328 127h1M342 127h1M329 128h1M341 128h1M330 129h1M340 129h1M331 130h2M338 130h2M333 131h5"/>
<path stroke="#f00" d="M323 151h1"/>
<path stroke="#f00" d="M265 159h1M264 160h1M264 161h1M263 162h1M263 163h1M262 164h1M261 165h1M261 166h1M260 167h1M260 168h1M259 169h1M258 170h1M258 171h1M257 172h1M257 173h1M256 174h1M255 175h1M255 176h1M254 177h1M254 178h1M253 179h1M252 180h1M252 181h1M251 182h1M251 183h1M250 184h1M249 185h1M249 186h1M248 187h1M248 188h1M247 189h1M246 190h1M246 191h1M245 192h1M245 193h1M244 194h1M243 195h1M243 196h1M242 197h1M242 198h1M241 199h1M240 200h1M240 201h1M239 202h1M239 203h1M238 204h1M237 205h1M237 206h1M236 207h1M236 208h1M235 209h1M234 210h1M234 211h1M233 212h1M233 213h1M232 214h1M231 215h1M231 216h1M230 217h1M230 218h1M229 219h1M228 220h1M228 221h1M227 222h1M227 223h1M226 224h1M225 225h1M225 226h1M224 227h1M224 228h1M223 229h1M222 230h1M222 231h1M221 232h1M221 233h1M220 234h1M219 235h1M219 236h1M218 237h1M218 238h1M217 239h1M216 240h1M216 241h1M215 242h1M215 243h1M214 244h1M213 245h1M213 246h1M212 247h1M212 248h1M211 249h1M210 250h1M210 251h1M209 252h1M209 253h1M208 254h1M207 255h1M207 256h1M206 257h1M206 258h1M205 259h1M204 260h1M204 261h1M203 262h1M203 263h1M202 264h1M201 265h1M201 266h1M200 267h1M200 268h1M199 269h1M198 270h1M198 271h1M197 272h1M197 273h1M196 274h1M195 275h1M195 276h1M194 277h1M194 278h1M193 279h1M192 280h1M192 281h1M191 282h1M191 283h1M190 284h1M189 285h1M189 286h1M188 287h1M188 288h1M187 289h1M186 290h1M186 291h1M185 292h1M185 293h1M184 294h1M183 295h1M183 296h1M182 297h1M182 298h1M181 299h1M180 300h1M180 301h1M179 302h1M179 303h1M178 304h1M177 305h1M177 306h1M176 307h1M176 308h1M175 309h1M174 310h1M174 311h1M173 312h1M173 313h1M172 314h1M171 315h1M171 316h1M170 317h1M170 318h1M169 319h1M168 320h1M168 321h1M167 322h1M167 323h1M166 324h1M165 325h1M165 326h1M164 327h1M164 328h1M163 329h1M162 330h1M162 331h1M161 332h1M161 333h1M160 334h1"/>
<path stroke="#ff0" d="M276 157h1M270 158h1M273 158h1M267 159h1"/>
<path stroke="#ff0" d="M156 289h1M156 292h1M155 295h1M155 298h1"/>
<path stroke="#f00" d="M316 156h1M312 160h1M308 163h1M304 167h1M300 170h1M296 174h1M292 177h1M288 181h1M284 184h1M280 188h1M276 192h1M272 195h1M268 199h1M264 202h1M260 206h1M256 209h1M252 213h1M248 216h1M244 220h1M240 224h1M236 227h1M232 231h1M228 234h1M224 238h1M220 241h1M216 245h1M212 248h1M208 252h1M204 255h1M200 259h1M196 263h1M192 266h1M188 270h1M184 273h1M180 277h1M176 280h1M172 284h1M168 287h1M164 291h1M160 295h1M156 298h1"/>
<path stroke="#f00" d="M222 180h1M225 180h1M228 181h1M231 182h1M234 183h1M237 183h1M240 184h1M243 185h1M246 186h1M249 186h1M252 187h1M255 188h1M258 189h1M261 190h1M264 190h1M267 191h1M270 192h1M273 193h1M276 193h1M279 194h1M282 195h1M285 196h1M288 196h1M291 197h1M294 198h1M297 199h1M300 200h1M303 200h1M306 201h1M309 202h1M312 203h1M315 203h1M318 204h1M321 205h1M324 206h1M327 207h1M330 207h1M333 208h1M336 209h1M339 210h1M342 210h1M345 211h1M348 212h1M351 213h1M354 213h1M357 214h1M360 215h1M363 216h1M366 217h1M369 217h1M372 218h1M375 219h1M378 220h1M381 220h1M384 221h1M387 222h1M390 223h1M393 224h1M396 224h1M399 225h1M402 226h1M405 227h1M408 227h1M411 228h1M414 229h1M417 230h1M420 230h1M423 231h1M426 232h1"/>
<path stroke="#f00" d="M316 156h1M314 158h1M312 159h1M310 161h1M308 163h1M306 164h1M304 166h1M302 168h1M300 169h1M298 171h1M296 173h1M294 174h1M292 176h1M290 178h1M288 179h1M286 181h1M284 183h1M282 184h1M280 186h1M278 188h1M276 189h1M274 191h1M272 193h1M270 194h1M268 196h1M266 198h1M264 199h1M262 201h1M260 203h1M258 204h1M256 206h1M254 208h1M252 209h1M250 211h1M248 213h1M246 214h1M244 216h1M242 218h1M240 219h1M238 221h1M236 222h1M234 224h1M232 226h1M230 227h1M228 229h1M226 231h1M224 232h1M222 234h1M220 236h1M218 237h1M216 239h1M214 241h1M212 242h1M210 244h1M208 246h1M206 247h1M204 249h1M202 251h1M200 252h1M198 254h1M196 256h1M194 257h1M192 259h1M190 261h1M188 262h1M186 264h1M184 266h1M182 267h1M180 269h1M178 271h1M176 272h1M174 274h1M172 276h1M170 277h1M168 279h1M166 281h1M164 282h1M162 284h1M160 286h1M158 287h1M156 289h1"/>
<path stroke="#f00" d="M322 157h1M319 159h1M316 162h1M313 164h1M310 167h1M307 169h1M304 171h1M301 174h1M298 176h1M295 178h1M292 181h1M289 183h1M286 186h1M283 188h1M280 190h1M277 193h1M274 195h1M271 198h1M268 200h1M265 202h1M262 205h1M259 207h1M256 209h1M253 212h1M250 214h1M247 217h1M244 219h1M241 221h1M238 224h1M235 226h1M232 229h1M229 231h1M226 233h1M223 236h1M220 238h1M217 240h1M214 243h1M211 245h1M208 248h1M205 250h1M202 252h1M199 255h1M196 257h1M193 260h1M190 262h1M187 264h1M184 267h1M181 269h1M178 272h1M175 274h1M172 276h1M169 279h1M166 281h1M163 283h1M160 286h1M157 288h1"/>
<path stroke="#f00" d="M276 157h1M274 160h1M272 163h1M270 166h1M268 169h1M266 172h1M264 175h1M262 178h1M260 181h1M258 184h1M256 187h1M254 190h1M252 193h1M250 196h1M248 199h1M247 202h1M245 205h1M243 208h1M241 211h1M239 214h1M237 217h1M235 220h1M233 223h1M231 226h1M229 229h1M227 232h1M225 235h1M223 238h1M221 241h1M219 244h1M217 247h1M215 250h1M213 253h1M211 256h1M209 259h1M207 262h1M205 265h1M203 268h1M201 271h1M199 274h1M197 277h1M195 280h1M193 283h1M191 286h1M189 289h1M188 292h1M186 295h1M184 298h1M182 301h1M180 304h1M178 307h1M176 310h1M174 313h1M172 316h1M170 319h1M168 322h1M166 325h1M164 328h1M162 331h1M160 334h1"/>
<path stroke="#0ff" d="M203 193h1M202 195h1M202 197h1M201 199h1M201 201h1M200 203h1M199 205h1M199 207h1M198 209h1M198 211h1M197 213h1M196 215h1M196 217h1M195 219h1M194 221h1M194 223h1M193 225h1M193 227h1M192 229h1M191 231h1M191 233h1M190 235h1M190 237h1M189 239h1M188 241h1M188 243h1M187 245h1M187 247h1M186 249h1M185 251h1M185 253h1M184 255h1M183 257h1M183 259h1M182 261h1M182 263h1M181 265h1M180 267h1M180 269h1M179 271h1M179 273h1M178 275h1M177 277h1M177 279h1M176 281h1M176 283h1M175 285h1M174 287h1M174 289h1M173 291h1M173 293h1M172 295h1M171 297h1M171 299h1M170 301h1M169 303h1M169 305h1M168 307h1M168 309h1M167 311h1M166 313h1M166 315h1M165 317h1M165 319h1M164 321h1M163 323h1M163 325h1M162 327h1M162 329h1M161 331h1M160 333h1"/>
<path stroke="#0f0" d="M322 157h1M318 161h1M315 165h1M311 169h1M307 173h1M304 177h1M300 181h1M296 185h1M293 189h1M289 193h1M285 197h1M282 201h1M278 205h1M274 209h1M271 213h1M267 217h1M263 221h1M260 225h1M256 229h1M252 233h1M249 237h1M245 241h1M241 245h1M238 249h1M234 253h1M230 257h1M227 261h1M223 265h1M219 269h1M216 273h1M212 277h1M209 281h1M205 285h1M201 289h1M198 293h1M194 297h1M190 301h1M187 305h1M183 309h1M179 313h1M176 317h1M172 321h1M168 325h1M165 329h1M161 333h1"/>
<path stroke="#0ff" d="M426 232h1M426 233h1M426 234h1M426 235h1M426 236h1M426 237h1M426 238h1M426 239h1M426 240h1M426 241h1M426 242h1M426 243h1M426 244h1M426 245h1M426 246h1M425 247h1M425 248h1M425 249h1M425 250h1M425 251h1M425 252h1M425 253h1M425 254h1M425 255h1M425 256h1M425 257h1M425 258h1M425 259h1M425 260h1M425 261h1M425 262h1M425 263h1M425 264h1M425 265h1M425 266h1M425 267h1M425 268h1M425 269h1M425 270h1M425 271h1M425 272h1M425 273h1M425 274h1M424 275h1M424 276h1M424 277h1M424 278h1M424 279h1M424 280h1M424 281h1M424 282h1M424 283h1M424 284h1M424 285h1M424 286h1M424 287h1M424 288h1M424 289h1M424 290h1M424 291h1M424 292h1M424 293h1M424 294h1M424 295h1M424 296h1M424 297h1M424 298h1M424 299h1M424 300h1M424 301h1M424 302h1M423 303h1M423 304h1M423 305h1M423 306h1M423 307h1M423 308h1M423 309h1M423 310h1M423 311h1M423 312h1M423 313h1M423 314h1M423 315h1M423 316h1M423 317h1M423 318h1M423 319h1M423 320h1M423 321h1M423 322h1M423 323h1M423 324h1M423 325h1M423 326h1M423 327h1M423 328h1M423 329h1M423 330h1M423 331h1M422 332h1M422 333h1M422 334h1M422 335h1M422 336h1M422 337h1M422 338h1M422 339h1M422 340h1M422 341h1M422 342h1M422 343h1M422 344h1M422 345h1M422 346h1M422 347h1M422 348h1M422 349h1M422 350h1M422 351h1M422 352h1M422 353h1M422 354h1M422 355h1M422 356h1M422 357h1M422 358h1M422 359h1M421 360h1M421 361h1M421 362h1M421 363h1M421 364h1M421 365h1M421 366h1M421 367h1M421 368h1M421 369h1M421 370h1M421 371h1M421 372h1M421 373h1M421 374h1"/>
<path stroke="#0f0" d="M165 351h1M169 351h1M173 352h1M177 352h1M181 352h1M185 353h1M189 353h1M193 354h1M197 354h1M201 354h1M205 355h1M209 355h1M213 355h1M217 356h1M221 356h1M225 356h1M229 357h1M233 357h1M237 357h1M241 358h1M245 358h1M249 359h1M253 359h1M257 359h1M261 360h1M265 360h1M269 360h1M273 361h1M277 361h1M281 361h1M285 362h1M289 362h1M293 363h1M297 363h1M301 363h1M305 364h1M309 364h1M313 364h1M317 365h1M321 365h1M325 365h1M329 366h1M333 366h1M337 366h1M341 367h1M345 367h1M349 368h1M353 368h1M357 368h1M361 369h1M365 369h1M369 369h1M373 370h1M377 370h1M381 370h1M385 371h1M389 371h1M393 371h1M397 372h1M401 372h1M405 373h1M409 373h1M413 373h1M417 374h1M421 374h1"/>
<path stroke="#0f0" d="M316 156h1M317 159h1M319 162h1M320 165h1M322 168h1M323 171h1M325 174h1M326 177h1M328 180h1M329 183h1M330 186h1M332 189h1M333 192h1M335 195h1M336 198h1M338 201h1M339 204h1M341 207h1M342 210h1M343 213h1M345 216h1M346 219h1M348 222h1M349 225h1M351 228h1M352 231h1M354 234h1M355 237h1M356 240h1M358 243h1M359 246h1M361 249h1M362 252h1M364 255h1M365 258h1M367 261h1M368 264h1M369 267h1M371 270h1M372 273h1M374 276h1M375 279h1M377 282h1M378 285h1M380 288h1M381 291h1M382 294h1M384 297h1M385 300h1M387 303h1M388 306h1M390 309h1M391 312h1M393 315h1M394 318h1M395 321h1M397 324h1M398 327h1M400 330h1M401 333h1M403 336h1M404 339h1M406 342h1M407 345h1M408 348h1M410 351h1M411 354h1M413 357h1M414 360h1M416 363h1M417 366h1M419 369h1M420 372h1"/>
<path stroke="#0f0" d="M322 157h1M324 161h1M326 165h1M327 169h1M329 173h1M331 177h1M333 181h1M335 185h1M337 189h1M338 193h1M340 197h1M342 201h1M344 205h1M346 209h1M348 213h1M349 217h1M351 221h1M353 225h1M355 229h1M357 233h1M358 237h1M360 241h1M362 245h1M364 249h1M366 253h1M368 257h1M369 261h1M371 265h1M373 269h1M375 273h1M377 277h1M379 281h1M380 285h1M382 289h1M384 293h1M386 297h1M388 301h1M390 305h1M391 309h1M393 313h1M395 317h1M397 321h1M399 325h1M400 329h1M402 333h1M404 337h1M406 341h1M408 345h1M410 349h1M411 353h1M413 357h1M415 361h1M417 365h1M419 369h1M421 373h1"/>
<path stroke="#00f" d="M425 232h1M421 234h1M417 236h1M413 238h1M409 240h1M405 242h1M401 243h1M397 245h1M393 247h1M389 249h1M385 251h1M381 253h1M377 254h1M373 256h1M369 258h1M365 260h1M361 262h1M357 263h1M353 265h1M349 267h1M345 269h1M341 271h1M337 273h1M333 274h1M329 276h1M325 278h1M321 280h1M317 282h1M313 284h1M309 285h1M305 287h1M301 289h1M297 291h1M293 293h1M289 294h1M285 296h1M281 298h1M277 300h1M273 302h1M269 304h1M265 305h1M261 307h1M257 309h1M253 311h1M249 313h1M245 315h1M241 316h1M237 318h1M233 320h1M229 322h1M225 324h1M221 325h1M217 327h1M213 329h1M209 331h1M205 333h1M201 335h1M197 336h1M193 338h1M189 340h1M185 342h1M181 344h1M177 346h1M173 347h1M169 349h1M165 351h1"/>
<path stroke="#0ff" d="M316 156h1M319 158h1M322 160h1M325 162h1M328 164h1M331 166h1M334 168h1M337 171h1M340 173h1M343 175h1M346 177h1M349 179h1M352 181h1M355 183h1M358 185h1M361 187h1M364 189h1M367 191h1M370 193h1M373 195h1M376 197h1M379 200h1M382 202h1M385 204h1M388 206h1M391 208h1M394 210h1M397 212h1M400 214h1M403 216h1M406 218h1M409 220h1M412 222h1M415 224h1M418 226h1M421 229h1M424 231h1"/>
<path stroke="#0f0" d="M316 156h1M315 157h1M314 158h1M314 159h1M313 160h1M312 161h1M311 162h1M311 163h1M310 164h1M309 165h1M308 166h1M307 167h1M307 168h1M306 169h1M305 170h1M304 171h1M304 172h1M303 173h1M302 174h1M301 175h1M301 176h1M300 177h1M299 178h1M298 179h1M297 180h1M297 181h1M296 182h1M295 183h1M294 184h1M294 185h1M293 186h1M292 187h1M291 188h1M290 189h1M290 190h1M289 191h1M288 192h1M287 193h1M287 194h1M286 195h1M285 196h1M284 197h1M283 198h1M283 199h1M282 200h1M281 201h1M280 202h1M280 203h1M279 204h1M278 205h1M277 206h1M277 207h1M276 208h1M275 209h1M274 210h1M273 211h1M273 212h1M272 213h1M271 214h1M270 215h1M270 216h1M269 217h1M268 218h1M267 219h1M266 220h1M266 221h1M265 222h1M264 223h1M263 224h1M263 225h1M262 226h1M261 227h1M260 228h1M259 229h1M259 230h1M258 231h1M257 232h1M256 233h1M256 234h1M255 235h1M254 236h1M253 237h1M253 238h1M252 239h1M251 240h1M250 241h1M249 242h1M249 243h1M248 244h1M247 245h1M246 246h1M246 247h1M245 248h1M244 249h1M243 250h1M242 251h1M242 252h1M241 253h1M240 254h1M239 255h1M239 256h1M238 257h1M237 258h1M236 259h1M235 260h1M235 261h1M234 262h1M233 263h1M232 264h1M232 265h1M231 266h1M230 267h1M229 268h1M228 269h1M228 270h1M227 271h1M226 272h1M225 273h1M225 274h1M224 275h1M223 276h1M222 277h1M222 278h1M221 279h1M220 280h1M219 281h1M218 282h1M218 283h1M217 284h1M216 285h1M215 286h1M215 287h1M214 288h1M213 289h1M212 290h1M211 291h1M211 292h1M210 293h1M209 294h1M208 295h1M208 296h1M207 297h1M206 298h1M205 299h1M204 300h1M204 301h1M203 302h1M202 303h1M201 304h1M201 305h1M200 306h1M199 307h1M198 308h1M198 309h1M197 310h1M196 311h1M195 312h1M194 313h1M194 314h1M193 315h1M192 316h1M191 317h1M191 318h1M190 319h1M189 320h1M188 321h1M187 322h1M187 323h1M186 324h1M185 325h1M184 326h1M184 327h1M183 328h1M182 329h1M181 330h1M180 331h1M180 332h1M179 333h1M178 334h1M177 335h1M177 336h1M176 337h1M175 338h1M174 339h1M174 340h1M173 341h1M172 342h1M171 343h1M170 344h1M170 345h1M169 346h1M168 347h1M167 348h1M167 349h1M166 350h1M165 351h1"/>
<path stroke="#0f0" d="M322 157h1M321 158h1M320 159h1M320 160h1M319 161h1M318 162h1M317 163h1M316 164h1M316 165h1M315 166h1M314 167h1M313 168h1M312 169h1M311 170h1M311 171h1M310 172h1M309 173h1M308 174h1M307 175h1M307 176h1M306 177h1M305 178h1M304 179h1M303 180h1M303 181h1M302 182h1M301 183h1M300 184h1M299 185h1M299 186h1M298 187h1M297 188h1M296 189h1M295 190h1M294 191h1M294 192h1M293 193h1M292 194h1M291 195h1M290 196h1M290 197h1M289 198h1M288 199h1M287 200h1M286 201h1M286 202h1M285 203h1M284 204h1M283 205h1M282 206h1M282 207h1M281 208h1M280 209h1M279 210h1M278 211h1M277 212h1M277 213h1M276 214h1M275 215h1M274 216h1M273 217h1M273 218h1M272 219h1M271 220h1M270 221h1M269 222h1M269 223h1M268 224h1M267 225h1M266 226h1M265 227h1M265 228h1M264 229h1M263 230h1M262 231h1M261 232h1M260 233h1M260 234h1M259 235h1M258 236h1M257 237h1M256 238h1M256 239h1M255 240h1M254 241h1M253 242h1M252 243h1M252 244h1M251 245h1M250 246h1M249 247h1M248 248h1M248 249h1M247 250h1M246 251h1M245 252h1M244 253h1M243 254h1M243 255h1M242 256h1M241 257h1M240 258h1M239 259h1M239 260h1M238 261h1M237 262h1M236 263h1M235 264h1M235 265h1M234 266h1M233 267h1M232 268h1M231 269h1M231 270h1M230 271h1M229 272h1M228 273h1M227 274h1M227 275h1M226 276h1M225 277h1M224 278h1M223 279h1M222 280h1M222 281h1M221 282h1M220 283h1M219 284h1M218 285h1M218 286h1M217 287h1M216 288h1M215 289h1M214 290h1M214 291h1M213 292h1M212 293h1M211 294h1M210 295h1M210 296h1M209 297h1M208 298h1M207 299h1M206 300h1M205 301h1M205 302h1M204 303h1M203 304h1M202 305h1M201 306h1M201 307h1M200 308h1M199 309h1M198 310h1M197 311h1M197 312h1M196 313h1M195 314h1M194 315h1M193 316h1M193 317h1M192 318h1M191 319h1M190 320h1M189 321h1M188 322h1M188 323h1M187 324h1M186 325h1M185 326h1M184 327h1M184 328h1M183 329h1M182 330h1M181 331h1M180 332h1M180 333h1M179 334h1M178 335h1M177 336h1M176 337h1M176 338h1M175 339h1M174 340h1M173 341h1M172 342h1M171 343h1M171 344h1M170 345h1M169 346h1M168 347h1M167 348h1M167 349h1M166 350h1M165 351h1"/>
<path stroke="#ff0" d="M316 156h1M318 156h1M320 157h1M322 157h1"/>
<path stroke="#c0c0c0" d="M0 0h760M0 599h760"/>
<path stroke="#c0c0c0" d="M0 0v600M759 0v600M599 0v600" transform="translate(.5,-.5)"/>
<path stroke="#f00" d="M746 106h1M749 106h1M752 106h1M745 107h2M748 107h2M751 107h1M745 108h1M747 108h2M750 108h2M744 109h1M747 109h1M750 109h1M746 111h1M749 111h1M752 111h1M745 112h2M748 112h2M751 112h1M745 113h1M747 113h2M750 113h2M744 114h1M747 114h1M750 114h1"/>
<path stroke="#ff0" d="M744 116h1M752 116h1M745 117h1M751 117h1M746 118h1M750 118h1M746 119h1M750 119h1M744 120h9M746 121h1M750 121h1M746 122h1M750 122h1M745 123h1M751 123h1M744 124h1M752 124h1"/>
<path stroke="#0f0" d="M745 126h1M751 126h1M746 127h1M750 127h1M747 128h3M746 129h1M750 129h1M745 130h1M751 130h1M745 131h1M751 131h1M745 132h1M751 132h1M746 133h1M750 133h1M747 134h3"/>
<path stroke="#00f" d="M745 136h1M751 136h1M746 137h1M750 137h1M747 138h3M746 139h1M750 139h1M745 140h1M751 140h1M745 141h1M751 141h1M745 142h1M751 142h1M746 143h1M750 143h1M747 144h3"/>
<path stroke="#f00" d="M745 146h1M752 146h1M746 147h6M747 148h1M750 148h1M747 149h1M750 149h1M747 150h1M750 150h1M747 151h1M750 151h1M747 152h1M750 152h1M746 153h6M745 154h1M752 154h1"/>
<path stroke="#ff0" d="M747 157h3M745 158h2M750 158h2M744 159h1M749 159h1M752 159h1M745 160h2M749 160h1M752 160h1M744 161h1M747 161h1M750 161h2M744 162h1M747 162h1M752 162h1M745 163h2M750 163h2M747 164h3"/>
<path stroke="#0f0" d="M747 166h3M746 167h1M750 167h1M745 168h1M751 168h1M745 169h1M751 169h1M745 170h1M751 170h1M746 171h1M750 171h1M744 172h1M746 172h1M750 172h1M745 173h1M751 173h1M752 174h1"/>
<path stroke="#00f" d="M744 176h1M746 176h1M748 176h1M745 177h1M747 177h1M749 177h1M751 177h1M745 178h1M747 178h1M749 178h3M745 179h1M747 179h1M749 179h1M751 179h1M745 180h1M747 180h1M749 180h1M751 180h1M745 181h1M747 181h1M749 181h1M751 181h1M745 182h1M747 182h1M749 182h1M751 182h1M745 183h1M747 183h1M750 183h1M749 184h1M751 184h1"/>
<path stroke="#f00" d="M744 186h1M746 186h1M748 186h1M745 187h1M747 187h1M749 187h1M745 188h1M747 188h1M749 188h1M745 189h1M747 189h1M749 189h1M745 190h1M747 190h1M749 190h1M745 191h1M747 191h1M749 191h1M745 192h1M747 192h1M749 192h1M752 192h1M745 193h1M747 193h1M749 193h1M752 193h1M750 194h2"/>
<path stroke="#ff0" d="M744 196h1M746 196h1M748 196h1M745 197h1M747 197h1M749 197h1M745 198h1M747 198h1M749 198h1M745 199h1M747 199h1M749 199h1M745 200h1M747 200h1M749 200h1M745 201h1M747 201h1M749 201h1M745 202h1M747 202h1M749 202h1M752 202h1M745 203h1M747 203h1M749 203h1M752 203h1M750 204h2"/>
<path stroke="#0f0" d="M750 206h3M751 207h2M750 208h1M752 208h1M745 209h1M749 209h1M746 210h1M748 210h1M747 211h1M746 212h1M748 212h1M745 213h1M749 213h1M744 214h1"/>
<path stroke="#00f" d="M745 216h1M748 216h1M750 216h2M744 217h2M748 217h2M752 217h1M745 218h1M747 218h1M749 218h1M752 218h1M745 219h1M747 219h1M750 219h2M745 220h1M747 220h1M751 220h1M746 221h1M752 221h1M746 222h1M752 222h1M746 223h1M752 223h1M751 224h1"/>
<path stroke="#f00" d="M747 236h3M745 237h2M750 237h2M745 238h1M751 238h1M744 239h1M752 239h1M744 240h1M748 240h1M752 240h1M744 241h1M752 241h1M745 242h1M751 242h1M745 243h2M750 243h2M747 244h3"/>
<path stroke="#00f" d="M746 246h3M745 247h1M749 247h2M746 248h1M750 248h1M747 249h1M751 249h1M747 250h1M751 250h1M747 251h1M751 251h1M746 252h1M750 252h1M745 253h1M749 253h2M746 254h3"/>
<path stroke="#0f0" d="M746 256h1M750 256h1M747 257h3M746 258h1M750 258h1M746 259h1M750 259h1M746 260h1M750 260h1M747 261h3M748 262h1M746 263h5M748 264h1"/>
<path stroke="#0f0" d="M747 266h3M746 267h1M750 267h1M746 268h1M750 268h1M746 269h1M750 269h1M747 270h3M748 271h1M746 272h5M748 273h1M748 274h1"/>
<path stroke="#f00" d="M750 276h3M751 277h2M750 278h1M752 278h1M746 279h2M749 279h1M745 280h1M748 280h1M744 281h1M749 281h1M744 282h1M749 282h1M745 283h1M748 283h1M746 284h2"/>
<path stroke="#f00" d="M751 286h1M745 287h2M750 287h1M747 288h1M750 288h1M747 289h1M750 289h1M746 290h1M750 290h1M746 291h1M750 291h1M745 292h1M750 292h1M745 293h8M750 294h1"/>
<path stroke="#ff0" d="M747 296h1M745 297h5M747 298h1M747 299h1M749 299h2M747 300h2M751 300h1M747 301h1M751 301h1M747 302h1M750 302h1M747 303h1M750 303h1M751 304h1"/>
<path stroke="#0f0" d="M745 306h1M751 306h1M746 307h1M750 307h1M746 308h1M748 308h1M750 308h1M746 309h5M746 310h1M748 310h1M750 310h1M745 311h1M748 311h1M751 311h1M747 312h3M747 313h1M749 313h1M748 314h1"/>
<path stroke="#00f" d="M745 316h1M748 316h1M751 316h1M744 317h2M747 317h3M751 317h2M745 318h1M748 318h1M751 318h1M746 319h1M748 319h1M750 319h1M747 320h3M748 321h1M746 322h5M748 323h1M748 324h1"/>
<path stroke="#00f" d="M745 326h1M748 326h1M751 326h1M745 327h1M747 327h1M749 327h1M751 327h1M745 328h1M748 328h1M751 328h1M746 329h1M750 329h1M747 330h3M748 331h1M746 332h5M748 333h1M748 334h1"/>
<path stroke="#008080" d="M747 336h3M746 337h1M750 337h1M745 338h1M751 338h1M745 339h1M751 339h1M745 340h1M751 340h1M746 341h1M750 341h1M745 342h2M750 342h2M744 343h1M746 343h1M750 343h1M752 343h1M745 344h1M751 344h1"/>
</g>
<g mask="url(#m)">
<g><text class="h" x="102.5" y="376" fill="#f00">1</text>
<text class="h" x="188.5" y="482" fill="#ff0">2</text>
<text class="h" x="298.5" y="514" fill="#0f0">3</text>
<text class="h" x="390.5" y="493" fill="#00f">4</text>
<text class="h" x="459.5" y="440" fill="#f00">5</text>
<text class="h" x="502.5" y="355" fill="#ff0">6</text>
<text class="h" x="496.5" y="232" fill="#0f0">7</text>
<text class="h" x="410.5" y="126" fill="#00f">8</text>
<text class="h" x="300.5" y="94" fill="#f00">9</text>
<text class="h" x="208.5" y="115" fill="#ff0">10</text>
<text class="h" x="139.5" y="168" fill="#0f0">11</text>
<text class="h" x="96.5" y="253" fill="#00f">12</text></g>
<g><text class="l" transform="translate(254.6,134) scale(0.51,1)" fill="#ff0" stroke="#ff0">MC</text>
<text class="l" transform="translate(119.5,309) scale(0.42,1)" fill="#f00" stroke="#f00">A<tspan font-size="20.5px" dx="2">s</tspan><tspan font-size="20.5px" dx="2">c</tspan></text></g>
<g class="t" xml:space="preserve"><text x="606" y="14"><tspan fill="#fff" stroke="#fff">Astrolog 5.40</tspan></text>
<text x="606" y="24"><tspan fill="#c0c0c0" stroke="#c0c0c0">"Anonymous"</tspan></text>
<text x="606" y="34"><tspan fill="#c0c0c0" stroke="#c0c0c0">Wed October 29, 2003</tspan></text>
<text x="606" y="44"><tspan fill="#c0c0c0" stroke="#c0c0c0"> 1:31pm (ST +8:00 GMT)</tspan></text>
<text x="606" y="54"><tspan fill="#c0c0c0" stroke="#c0c0c0">"FUCHOW"</tspan></text>
<text x="606" y="64"><tspan fill="#c0c0c0" stroke="#c0c0c0">116°20E 28°01N</tspan></text>
<text x="606" y="74"><tspan fill="#c0c0c0" stroke="#c0c0c0">Placidus houses.</tspan></text>
<text x="606" y="84"><tspan fill="#c0c0c0" stroke="#c0c0c0">Tropical, Geocentric.</tspan></text>
<text x="606" y="94"><tspan fill="#c0c0c0" stroke="#c0c0c0">Julian Day = 2452941.7299</tspan></text>
<text x="606" y="114"><tspan fill="#f00" stroke="#f00"> 1st house: </tspan><tspan fill="#0f0" stroke="#0f0">14Aqu45</tspan></text>
<text x="606" y="124"><tspan fill="#ff0" stroke="#ff0"> 2nd house: </tspan><tspan fill="#00f" stroke="#00f">25Pis09</tspan></text>
<text x="606" y="134"><tspan fill="#0f0" stroke="#0f0"> 3rd house: </tspan><tspan fill="#ff0" stroke="#ff0"> 0Tau26</tspan></text>
<text x="606" y="144"><tspan fill="#00f" stroke="#00f"> 4th house: </tspan><tspan fill="#ff0" stroke="#ff0">28Tau28</tspan></text>
<text x="606" y="154"><tspan fill="#f00" stroke="#f00"> 5th house: </tspan><tspan fill="#0f0" stroke="#0f0">22Gem30</tspan></text>
<text x="606" y="164"><tspan fill="#ff0" stroke="#ff0"> 6th house: </tspan><tspan fill="#00f" stroke="#00f">16Can23</tspan></text>
<text x="606" y="174"><tspan fill="#0f0" stroke="#0f0"> 7th house: </tspan><tspan fill="#f00" stroke="#f00">14Leo45</tspan></text>
<text x="606" y="184"><tspan fill="#00f" stroke="#00f"> 8th house: </tspan><tspan fill="#ff0" stroke="#ff0">25Vir09</tspan></text>
<text x="606" y="194"><tspan fill="#f00" stroke="#f00"> 9th house: </tspan><tspan fill="#00f" stroke="#00f"> 0Sco26</tspan></text>
<text x="606" y="204"><tspan fill="#ff0" stroke="#ff0">10th house: </tspan><tspan fill="#00f" stroke="#00f">28Sco28</tspan></text>
<text x="606" y="214"><tspan fill="#0f0" stroke="#0f0">11th house: </tspan><tspan fill="#f00" stroke="#f00">22Sag30</tspan></text>
<text x="606" y="224"><tspan fill="#00f" stroke="#00f">12th house: </tspan><tspan fill="#ff0" stroke="#ff0">16Cap23</tspan></text>
<text x="606" y="244"><tspan fill="#f00" stroke="#f00"> Sun: </tspan><tspan fill="#00f" stroke="#00f"> 5Sco23</tspan><tspan fill="#fff" stroke="#fff">  </tspan><tspan fill="#c0c0c0" stroke="#c0c0c0">- 0°00'</tspan></text>
<text x="606" y="254"><tspan fill="#00f" stroke="#00f">Moon: </tspan><tspan fill="#f00" stroke="#f00">26Sag53</tspan><tspan fill="#fff" stroke="#fff">  </tspan><tspan fill="#c0c0c0" stroke="#c0c0c0">- 3°08'</tspan></text>
<text x="606" y="264"><tspan fill="#0f0" stroke="#0f0">Merc: </tspan><tspan fill="#00f" stroke="#00f"> 7Sco51</tspan><tspan fill="#fff" stroke="#fff">  </tspan><tspan fill="#c0c0c0" stroke="#c0c0c0">+ 0°12'</tspan></text>
<text x="606" y="274"><tspan fill="#0f0" stroke="#0f0">Venu: </tspan><tspan fill="#00f" stroke="#00f">24Sco11</tspan><tspan fill="#fff" stroke="#fff">  </tspan><tspan fill="#c0c0c0" stroke="#c0c0c0">- 0°06'</tspan></text>
<text x="606" y="284"><tspan fill="#f00" stroke="#f00">Mars: </tspan><tspan fill="#00f" stroke="#00f"> 6Pis17</tspan><tspan fill="#fff" stroke="#fff">  </tspan><tspan fill="#c0c0c0" stroke="#c0c0c0">- 2°31'</tspan></text>
<text x="606" y="294"><tspan fill="#f00" stroke="#f00">Jupi: </tspan><tspan fill="#ff0" stroke="#ff0">12Vir37</tspan><tspan fill="#fff" stroke="#fff">  </tspan><tspan fill="#c0c0c0" stroke="#c0c0c0">+ 0°57'</tspan></text>
<text x="606" y="304"><tspan fill="#ff0" stroke="#ff0">Satu: </tspan><tspan fill="#00f" stroke="#00f">13Can13</tspan><tspan fill="#fff" stroke="#fff">R </tspan><tspan fill="#c0c0c0" stroke="#c0c0c0">- 0°44'</tspan></text>
<text x="606" y="314"><tspan fill="#0f0" stroke="#0f0">Uran: </tspan><tspan fill="#0f0" stroke="#0f0">28Aqu57</tspan><tspan fill="#fff" stroke="#fff">R </tspan><tspan fill="#c0c0c0" stroke="#c0c0c0">- 0°46'</tspan></text>
<text x="606" y="324"><tspan fill="#00f" stroke="#00f">Nept: </tspan><tspan fill="#0f0" stroke="#0f0">10Aqu25</tspan><tspan fill="#fff" stroke="#fff">  </tspan><tspan fill="#c0c0c0" stroke="#c0c0c0">- 0°01'</tspan></text>
<text x="606" y="334"><tspan fill="#00f" stroke="#00f">Plut: </tspan><tspan fill="#f00" stroke="#f00">18Sag13</tspan><tspan fill="#fff" stroke="#fff">  </tspan><tspan fill="#c0c0c0" stroke="#c0c0c0">+ 8°47'</tspan></text>
<text x="606" y="344"><tspan fill="#008080" stroke="#008080">Node: </tspan><tspan fill="#ff0" stroke="#ff0">21Tau05</tspan><tspan fill="#fff" stroke="#fff">R </tspan><tspan fill="#c0c0c0" stroke="#c0c0c0">+ 0°00'</tspan></text>
<text x="606" y="364"><tspan fill="#c0c0c0" stroke="#c0c0c0">Fire: 2, Earth: 2,</tspan></text>
<text x="606" y="374"><tspan fill="#c0c0c0" stroke="#c0c0c0">Air : 3, Water: 6</tspan></text>
<text x="606" y="384"><tspan fill="#c0c0c0" stroke="#c0c0c0">Car: 1, Fix: 8, Mut: 4</tspan></text>
<text x="606" y="394"><tspan fill="#c0c0c0" stroke="#c0c0c0">Yang: 5, Yin: 8</tspan></text>
<text x="606" y="404"><tspan fill="#c0c0c0" stroke="#c0c0c0">M: 7, N: 4, A: 6, D: 5</tspan></text>
<text x="606" y="414"><tspan fill="#c0c0c0" stroke="#c0c0c0">Ang: 4, Suc: 2, Cad: 5</tspan></text>
<text x="606" y="424"><tspan fill="#c0c0c0" stroke="#c0c0c0">Learn: 3, Share: 10</tspan></text></g>
</g>
</svg>
</body></html>
